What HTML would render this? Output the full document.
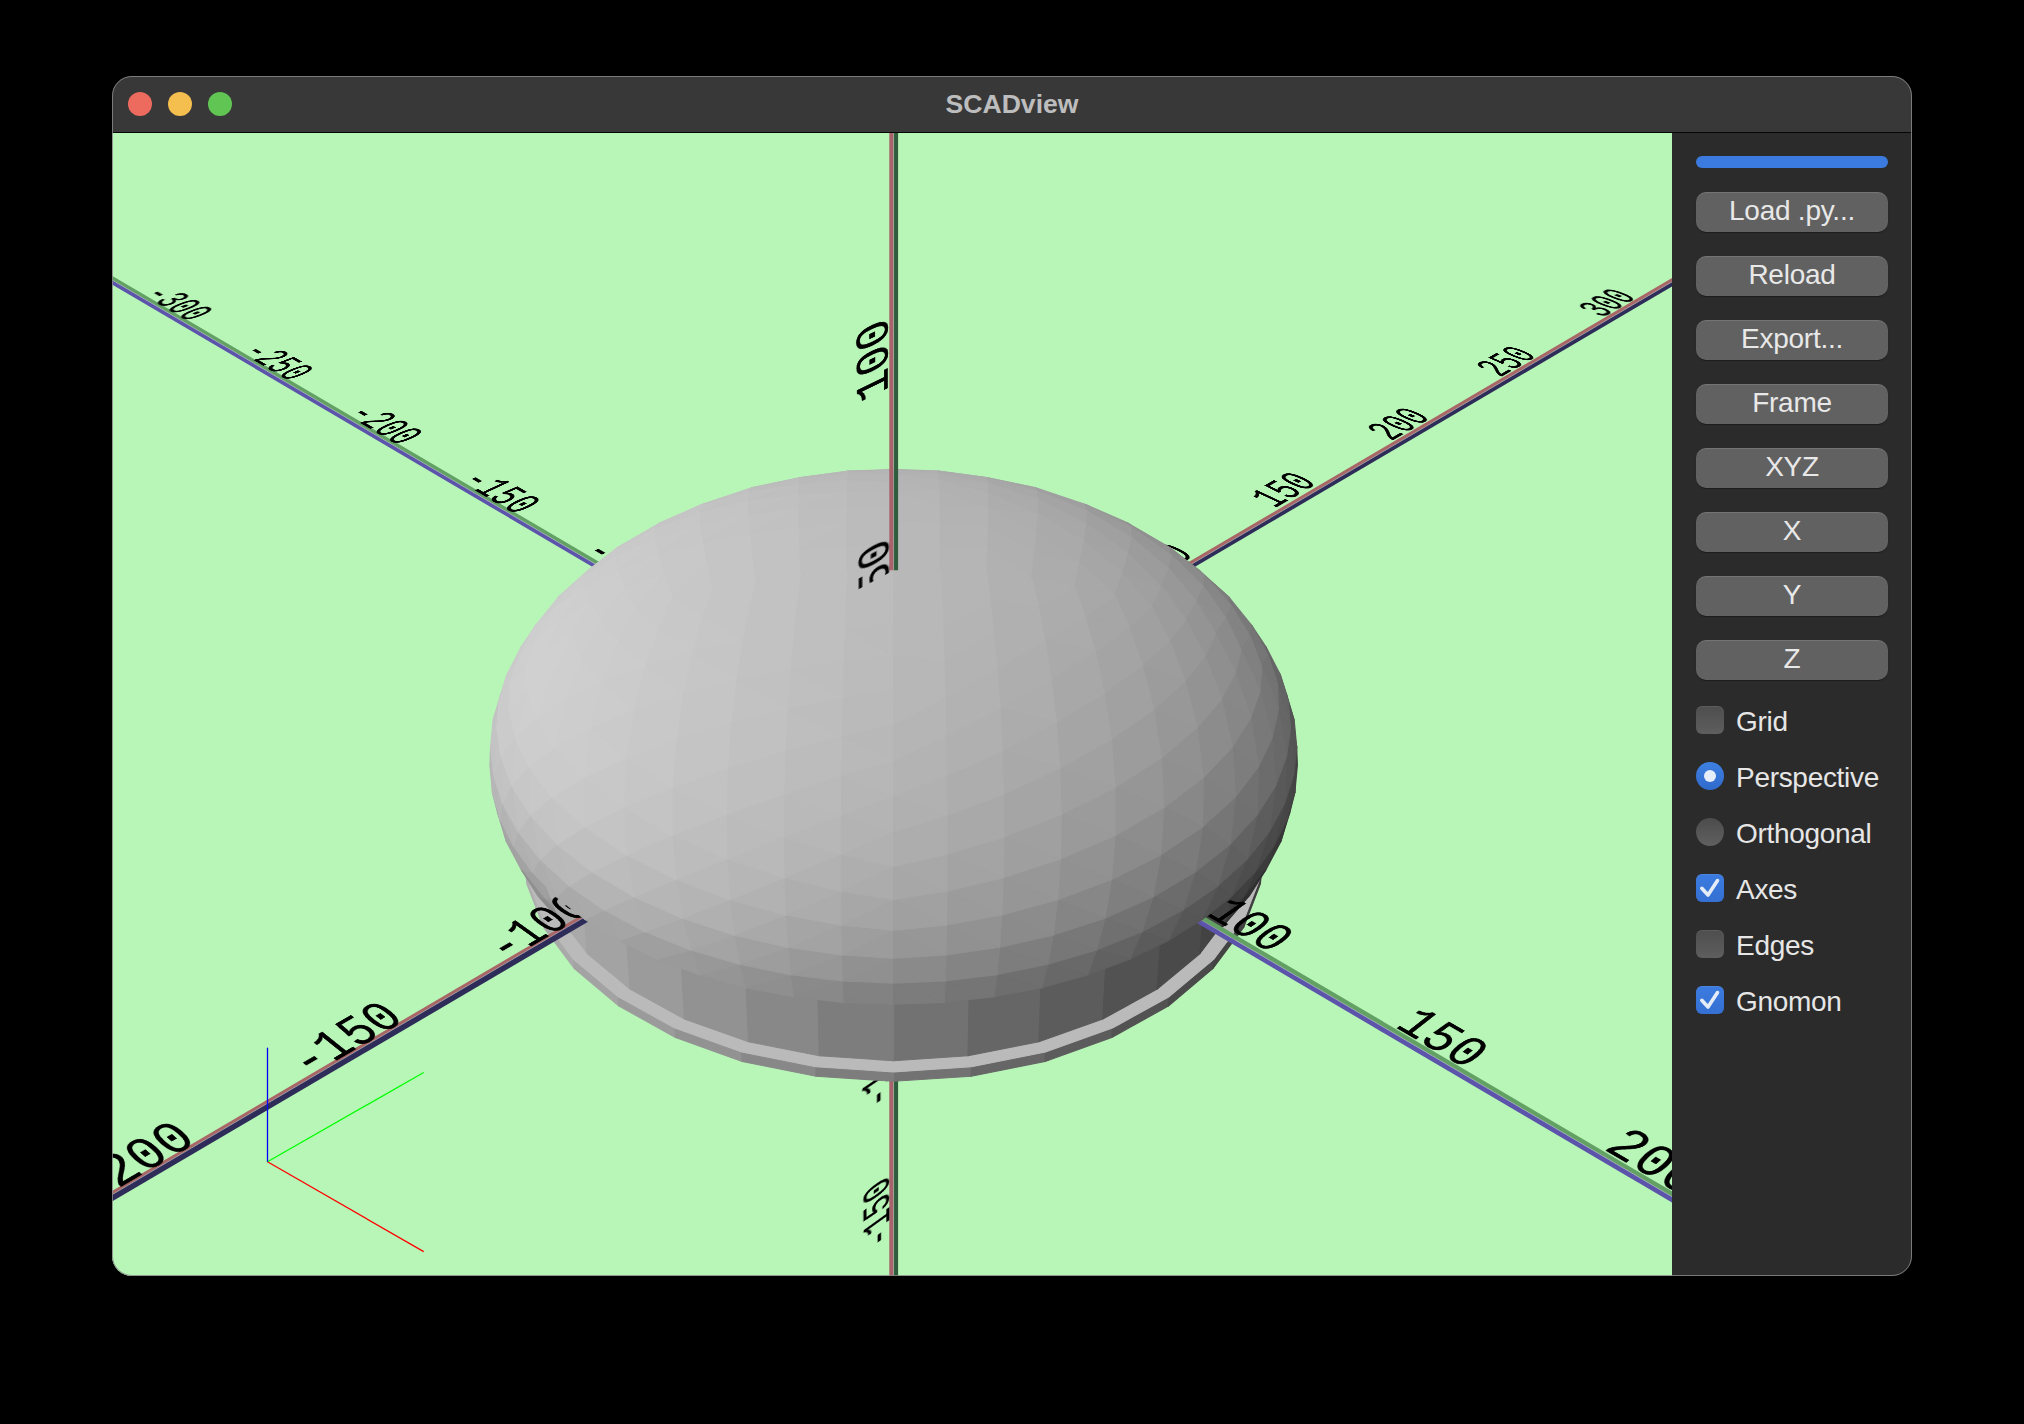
<!DOCTYPE html>
<html><head><meta charset="utf-8">
<style>
html,body{margin:0;padding:0;background:#000;width:2024px;height:1424px;overflow:hidden;font-family:"Liberation Sans",sans-serif;}
#win{position:absolute;left:112px;top:76px;width:1800px;height:1200px;border-radius:20px;overflow:hidden;background:#2b2b2b;}
#title{position:absolute;left:0;top:0;width:1800px;height:56px;background:#383838;}
#title .t{position:absolute;left:0;width:1800px;top:12.5px;text-align:center;color:#bdbdbd;font-weight:bold;font-size:26.6px;line-height:30px;}
.dot{position:absolute;top:16px;width:24px;height:24px;border-radius:50%;}
#sep{position:absolute;left:0;top:56px;width:1800px;height:1px;background:#050505;}
#view{position:absolute;left:0;top:57px;width:1560px;height:1143px;background:#b8f6b7;overflow:hidden;}
#panel{position:absolute;left:1560px;top:57px;width:240px;height:1143px;background:#2b2b2b;}
#frame{position:absolute;left:112px;top:76px;width:1800px;height:1200px;border-radius:20px;box-sizing:border-box;border:1px solid rgba(135,135,135,0.85);pointer-events:none;}
.btn{position:absolute;left:24px;width:192px;height:40px;border-radius:10px;background:#616161;color:#e8e8e8;font-size:28px;text-align:center;line-height:37px;letter-spacing:-0.25px;box-shadow:0 1px 1px rgba(0,0,0,0.35), inset 0 1px 0 rgba(255,255,255,0.12);}
.prog{position:absolute;left:24px;top:23px;width:192px;height:12px;border-radius:6px;background:#3b7ade;}
.cb{position:absolute;left:24px;width:28px;height:28px;border-radius:6px;background:linear-gradient(#4e4e4e,#5e5e5e);box-shadow:inset 0 1px 0 rgba(255,255,255,0.08);}
.cb.on{background:linear-gradient(#3b7be0,#3570d2);}
.rd{position:absolute;left:24px;width:28px;height:28px;border-radius:50%;background:linear-gradient(#4c4c4c,#606060);}
.rd.on{background:linear-gradient(#3e80e2,#2f6acb);}
.rd.on::after{content:"";position:absolute;left:8px;top:8px;width:12px;height:12px;border-radius:50%;background:#e6eefc;}
.lbl{position:absolute;left:64px;color:#e6e6e6;font-size:28px;line-height:30px;letter-spacing:-0.3px;}
.sv{position:absolute;left:0;top:0;}
.lb{position:absolute;left:0;top:0;font-family:"Liberation Mono",monospace;font-size:40px;line-height:40px;white-space:nowrap;transform-origin:0 0;color:#000;-webkit-text-stroke:0.3px #000;}
</style></head><body>
<div id="win">
  <div id="title">
    <div class="dot" style="left:16px;background:#ec6a5e;"></div>
    <div class="dot" style="left:56px;background:#f4bf4f;"></div>
    <div class="dot" style="left:96px;background:#61c554;"></div>
    <div class="t">SCADview</div>
  </div>
  <div id="sep"></div>
  <div id="view">
<svg class="sv" width="1560" height="1143"><polygon points="-161.4,52.1 781.6,606.3 783.5,603.1 -159.5,48.9" fill="#62a064"/><polygon points="-161.4,52.1 781.6,606.3 779.7,609.7 -163.4,55.4" fill="#5c54aa"/><line x1="-161.4" y1="52.1" x2="781.6" y2="606.3" stroke="#e8e0e8" stroke-opacity="0.4" stroke-width="0.9"/><polygon points="781.6,606.3 1724.7,52.1 1723.0,49.2 780.0,603.4" fill="#a86666"/><polygon points="781.6,606.3 1724.7,52.1 1726.7,55.5 783.7,609.7" fill="#2e2d5a"/><line x1="781.6" y1="606.3" x2="1724.7" y2="52.1" stroke="#e8e0e8" stroke-opacity="0.4" stroke-width="0.9"/><polygon points="781.6,1638.5 781.6,671.8 777.3,671.8 777.3,1638.5" fill="#a8626c"/><polygon points="781.6,1638.5 781.6,671.8 786.1,671.8 786.1,1638.5" fill="#2f5c3c"/><line x1="781.6" y1="1638.5" x2="781.6" y2="671.8" stroke="#e8e0e8" stroke-opacity="0.4" stroke-width="0.9"/></svg>
<div class="lb" style="transform:matrix3d(0.466283,0.248882,0,-0.000169177,-1.00648,0.343458,0,-0.000233465,0,0,1,0,60.1097,150.162,0,1)">-300</div>
<div class="lb" style="transform:matrix3d(0.482665,0.257616,0,-0.000175102,-1.04165,0.35551,0,-0.000241641,0,0,1,0,158.437,206.841,0,1)">-250</div>
<div class="lb" style="transform:matrix3d(0.500199,0.266911,0,-0.000181457,-1.07943,0.368337,0,-0.00025041,0,0,1,0,264.123,268.04,0,1)">-200</div>
<div class="lb" style="transform:matrix3d(0.519036,0.276924,0,-0.00018829,-1.12008,0.382155,0,-0.00025984,0,0,1,0,377.877,333.727,0,1)">-150</div>
<div class="lb" style="transform:matrix3d(0.539346,0.287761,0,-0.000195658,-1.16391,0.39711,0,-0.000270008,0,0,1,0,500.533,404.338,0,1)">-100</div>
<div class="lb" style="transform:matrix3d(0.858682,-0.292987,0,0.000198927,0.755115,0.404322,0,-0.00027452,0,0,1,0,1005.02,433.57,0,1)">100</div>
<div class="lb" style="transform:matrix3d(0.825826,-0.281776,0,0.000191316,0.726222,0.388851,0,-0.000264016,0,0,1,0,1131.73,360.625,0,1)">150</div>
<div class="lb" style="transform:matrix3d(0.795318,-0.271134,0,0.000184265,0.699561,0.374165,0,-0.000254286,0,0,1,0,1248.7,294.457,0,1)">200</div>
<div class="lb" style="transform:matrix3d(0.767085,-0.261497,0,0.000177716,0.674647,0.360866,0,-0.000245248,0,0,1,0,1357.93,231.691,0,1)">250</div>
<div class="lb" style="transform:matrix3d(0.74098,-0.252539,0,0.000171616,0.651183,0.348504,0,-0.00023683,0,0,1,0,1460.77,173.135,0,1)">300</div>
<div class="lb" style="transform:matrix3d(-0.160489,-0.92841,0,-0.000205323,1.18403,-0.403435,0,0.000274383,0,0,1,0,747.871,986.296,0,1)">-100</div>
<div class="lb" style="transform:matrix3d(-0.154159,-0.891789,0,-0.000197224,1.13733,-0.387521,0,0.00026356,0,0,1,0,749.203,1125.75,0,1)">-150</div>
<div class="lb" style="transform:matrix3d(-0.148309,-0.857947,0,-0.00018974,1.09417,-0.372815,0,0.000253558,0,0,1,0,750.434,1254.62,0,1)">-200</div>
<svg class="sv" width="1560" height="1143"><polygon points="781.6,948.3 859.3,943.3 859.5,933.8 781.6,938.9" fill="#727272" stroke="#727272" stroke-width="1.1" stroke-linejoin="round"/><polygon points="859.3,943.3 933.1,928.4 933.5,918.9 859.5,933.8" fill="#666666" stroke="#666666" stroke-width="1.1" stroke-linejoin="round"/><polygon points="933.1,928.4 999.8,904.5 1000.4,895.1 933.5,918.9" fill="#5c5c5c" stroke="#5c5c5c" stroke-width="1.1" stroke-linejoin="round"/><polygon points="999.8,904.5 1056.4,873.0 1057.1,863.7 1000.4,895.1" fill="#525252" stroke="#525252" stroke-width="1.1" stroke-linejoin="round"/><polygon points="1056.4,873.0 1100.8,835.7 1101.6,826.4 1057.1,863.7" fill="#4a4a4a" stroke="#4a4a4a" stroke-width="1.1" stroke-linejoin="round"/><polygon points="1100.8,835.7 1131.7,794.4 1132.6,785.1 1101.6,826.4" fill="#434343" stroke="#434343" stroke-width="1.1" stroke-linejoin="round"/><polygon points="1131.7,794.4 1148.4,750.9 1149.3,741.8 1132.6,785.1" fill="#3e3e3e" stroke="#3e3e3e" stroke-width="1.1" stroke-linejoin="round"/><polygon points="414.8,750.9 431.6,794.4 430.7,785.1 413.9,741.8" fill="#aeaeae" stroke="#aeaeae" stroke-width="1.1" stroke-linejoin="round"/><polygon points="431.6,794.4 462.4,835.7 461.6,826.4 430.7,785.1" fill="#a9a9a9" stroke="#a9a9a9" stroke-width="1.1" stroke-linejoin="round"/><polygon points="462.4,835.7 506.9,873.0 506.2,863.7 461.6,826.4" fill="#a3a3a3" stroke="#a3a3a3" stroke-width="1.1" stroke-linejoin="round"/><polygon points="506.9,873.0 563.5,904.5 562.9,895.1 506.2,863.7" fill="#9b9b9b" stroke="#9b9b9b" stroke-width="1.1" stroke-linejoin="round"/><polygon points="563.5,904.5 630.2,928.4 629.8,918.9 562.9,895.1" fill="#929292" stroke="#929292" stroke-width="1.1" stroke-linejoin="round"/><polygon points="630.2,928.4 704.0,943.3 703.8,933.8 629.8,918.9" fill="#888888" stroke="#888888" stroke-width="1.1" stroke-linejoin="round"/><polygon points="704.0,943.3 781.6,948.3 781.6,938.9 703.8,933.8" fill="#7d7d7d" stroke="#7d7d7d" stroke-width="1.1" stroke-linejoin="round"/><polygon points="781.6,938.9 859.5,933.8 933.5,918.9 1000.4,895.1 1057.1,863.7 1101.6,826.4 1132.6,785.1 1149.3,741.8 1152.1,698.1 1141.6,655.7 1118.9,616.0 1085.4,580.2 1042.7,549.2 992.5,523.6 936.4,504.0 876.1,490.8 813.4,484.1 749.9,484.1 687.1,490.8 626.9,504.0 570.8,523.6 520.6,549.2 477.9,580.2 444.4,616.0 421.7,655.7 411.2,698.1 413.9,741.8 430.7,785.1 461.6,826.4 506.2,863.7 562.9,895.1 629.8,918.9 703.8,933.8" fill="#bababa" stroke="#bababa" stroke-width="1.1" stroke-linejoin="round"/><polygon points="781.6,871.3 731.0,869.4 781.6,888.5" fill="#737373" stroke="#737373" stroke-width="1.1" stroke-linejoin="round"/><polygon points="731.0,869.4 730.7,886.7 781.6,888.5" fill="#737373" stroke="#737373" stroke-width="1.1" stroke-linejoin="round"/><polygon points="731.0,869.4 681.3,863.8 730.7,886.7" fill="#797979" stroke="#797979" stroke-width="1.1" stroke-linejoin="round"/><polygon points="681.3,863.8 679.5,880.9 730.7,886.7" fill="#797979" stroke="#797979" stroke-width="1.1" stroke-linejoin="round"/><polygon points="681.3,863.8 633.2,854.6 679.5,880.9" fill="#808080" stroke="#808080" stroke-width="1.1" stroke-linejoin="round"/><polygon points="633.2,854.6 629.1,871.0 679.5,880.9" fill="#7f7f7f" stroke="#7f7f7f" stroke-width="1.1" stroke-linejoin="round"/><polygon points="633.2,854.6 587.7,842.0 629.1,871.0" fill="#868686" stroke="#868686" stroke-width="1.1" stroke-linejoin="round"/><polygon points="587.7,842.0 580.8,856.8 629.1,871.0" fill="#858585" stroke="#858585" stroke-width="1.1" stroke-linejoin="round"/><polygon points="587.7,842.0 545.5,826.2 580.8,856.8" fill="#8d8d8d" stroke="#8d8d8d" stroke-width="1.1" stroke-linejoin="round"/><polygon points="545.5,826.2 535.8,838.7 580.8,856.8" fill="#8b8b8b" stroke="#8b8b8b" stroke-width="1.1" stroke-linejoin="round"/><polygon points="545.5,826.2 507.1,807.7 535.8,838.7" fill="#929292" stroke="#929292" stroke-width="1.1" stroke-linejoin="round"/><polygon points="507.1,807.7 495.4,817.1 535.8,838.7" fill="#909090" stroke="#909090" stroke-width="1.1" stroke-linejoin="round"/><polygon points="507.1,807.7 473.2,786.6 495.4,817.1" fill="#989898" stroke="#989898" stroke-width="1.1" stroke-linejoin="round"/><polygon points="473.2,786.6 460.5,792.5 495.4,817.1" fill="#969696" stroke="#969696" stroke-width="1.1" stroke-linejoin="round"/><polygon points="473.2,786.6 444.1,763.6 460.5,792.5" fill="#9c9c9c" stroke="#9c9c9c" stroke-width="1.1" stroke-linejoin="round"/><polygon points="444.1,763.6 431.8,765.7 460.5,792.5" fill="#9a9a9a" stroke="#9a9a9a" stroke-width="1.1" stroke-linejoin="round"/><polygon points="444.1,763.6 420.1,738.9 431.8,765.7" fill="#a0a0a0" stroke="#a0a0a0" stroke-width="1.1" stroke-linejoin="round"/><polygon points="420.1,738.9 409.7,737.4 431.8,765.7" fill="#9f9f9f" stroke="#9f9f9f" stroke-width="1.1" stroke-linejoin="round"/><polygon points="420.1,738.9 401.5,713.0 409.7,737.4" fill="#a3a3a3" stroke="#a3a3a3" stroke-width="1.1" stroke-linejoin="round"/><polygon points="401.5,713.0 394.3,708.4 409.7,737.4" fill="#a2a2a2" stroke="#a2a2a2" stroke-width="1.1" stroke-linejoin="round"/><polygon points="401.5,713.0 388.2,686.3 394.3,708.4" fill="#a5a5a5" stroke="#a5a5a5" stroke-width="1.1" stroke-linejoin="round"/><polygon points="388.2,686.3 385.4,679.4 394.3,708.4" fill="#a5a5a5" stroke="#a5a5a5" stroke-width="1.1" stroke-linejoin="round"/><polygon points="388.2,686.3 380.4,659.3 385.4,679.4" fill="#a7a7a7" stroke="#a7a7a7" stroke-width="1.1" stroke-linejoin="round"/><polygon points="781.6,888.5 730.7,886.7 781.6,901.5" fill="#646464" stroke="#646464" stroke-width="1.1" stroke-linejoin="round"/><polygon points="730.7,886.7 730.5,900.0 781.6,901.5" fill="#646464" stroke="#646464" stroke-width="1.1" stroke-linejoin="round"/><polygon points="730.7,886.7 679.5,880.9 730.5,900.0" fill="#6a6a6a" stroke="#6a6a6a" stroke-width="1.1" stroke-linejoin="round"/><polygon points="679.5,880.9 678.0,894.1 730.5,900.0" fill="#6a6a6a" stroke="#6a6a6a" stroke-width="1.1" stroke-linejoin="round"/><polygon points="679.5,880.9 629.1,871.0 678.0,894.1" fill="#717171" stroke="#717171" stroke-width="1.1" stroke-linejoin="round"/><polygon points="629.1,871.0 625.5,883.3 678.0,894.1" fill="#707070" stroke="#707070" stroke-width="1.1" stroke-linejoin="round"/><polygon points="629.1,871.0 580.8,856.8 625.5,883.3" fill="#777777" stroke="#777777" stroke-width="1.1" stroke-linejoin="round"/><polygon points="580.8,856.8 574.9,867.4 625.5,883.3" fill="#757575" stroke="#757575" stroke-width="1.1" stroke-linejoin="round"/><polygon points="580.8,856.8 535.8,838.7 574.9,867.4" fill="#7d7d7d" stroke="#7d7d7d" stroke-width="1.1" stroke-linejoin="round"/><polygon points="535.8,838.7 528.0,846.6 574.9,867.4" fill="#7b7b7b" stroke="#7b7b7b" stroke-width="1.1" stroke-linejoin="round"/><polygon points="535.8,838.7 495.4,817.1 528.0,846.6" fill="#838383" stroke="#838383" stroke-width="1.1" stroke-linejoin="round"/><polygon points="495.4,817.1 486.6,821.5 528.0,846.6" fill="#818181" stroke="#818181" stroke-width="1.1" stroke-linejoin="round"/><polygon points="495.4,817.1 460.5,792.5 486.6,821.5" fill="#888888" stroke="#888888" stroke-width="1.1" stroke-linejoin="round"/><polygon points="460.5,792.5 452.3,793.1 486.6,821.5" fill="#868686" stroke="#868686" stroke-width="1.1" stroke-linejoin="round"/><polygon points="460.5,792.5 431.8,765.7 452.3,793.1" fill="#8c8c8c" stroke="#8c8c8c" stroke-width="1.1" stroke-linejoin="round"/><polygon points="431.8,765.7 425.8,762.6 452.3,793.1" fill="#8b8b8b" stroke="#8b8b8b" stroke-width="1.1" stroke-linejoin="round"/><polygon points="431.8,765.7 409.7,737.4 425.8,762.6" fill="#909090" stroke="#909090" stroke-width="1.1" stroke-linejoin="round"/><polygon points="781.6,901.5 730.5,900.0 781.6,910.2" fill="#575757" stroke="#575757" stroke-width="1.1" stroke-linejoin="round"/><polygon points="730.5,900.0 730.5,908.8 781.6,910.2" fill="#575757" stroke="#575757" stroke-width="1.1" stroke-linejoin="round"/><polygon points="730.5,900.0 678.0,894.1 730.5,908.8" fill="#5d5d5d" stroke="#5d5d5d" stroke-width="1.1" stroke-linejoin="round"/><polygon points="678.0,894.1 677.0,902.4 730.5,908.8" fill="#5c5c5c" stroke="#5c5c5c" stroke-width="1.1" stroke-linejoin="round"/><polygon points="678.0,894.1 625.5,883.3 677.0,902.4" fill="#636363" stroke="#636363" stroke-width="1.1" stroke-linejoin="round"/><polygon points="625.5,883.3 623.1,890.4 677.0,902.4" fill="#616161" stroke="#616161" stroke-width="1.1" stroke-linejoin="round"/><polygon points="625.5,883.3 574.9,867.4 623.1,890.4" fill="#686868" stroke="#686868" stroke-width="1.1" stroke-linejoin="round"/><polygon points="574.9,867.4 571.0,872.3 623.1,890.4" fill="#676767" stroke="#676767" stroke-width="1.1" stroke-linejoin="round"/><polygon points="574.9,867.4 528.0,846.6 571.0,872.3" fill="#6e6e6e" stroke="#6e6e6e" stroke-width="1.1" stroke-linejoin="round"/><polygon points="528.0,846.6 523.4,848.3 571.0,872.3" fill="#6c6c6c" stroke="#6c6c6c" stroke-width="1.1" stroke-linejoin="round"/><polygon points="528.0,846.6 486.6,821.5 523.4,848.3" fill="#737373" stroke="#737373" stroke-width="1.1" stroke-linejoin="round"/><polygon points="486.6,821.5 482.8,819.6 523.4,848.3" fill="#717171" stroke="#717171" stroke-width="1.1" stroke-linejoin="round"/><polygon points="486.6,821.5 452.3,793.1 482.8,819.6" fill="#787878" stroke="#787878" stroke-width="1.1" stroke-linejoin="round"/><polygon points="781.6,910.2 730.5,908.8 781.6,914.6" fill="#4d4d4d" stroke="#4d4d4d" stroke-width="1.1" stroke-linejoin="round"/><polygon points="730.5,908.8 730.6,912.6 781.6,914.6" fill="#4d4d4d" stroke="#4d4d4d" stroke-width="1.1" stroke-linejoin="round"/><polygon points="730.5,908.8 677.0,902.4 730.6,912.6" fill="#525252" stroke="#525252" stroke-width="1.1" stroke-linejoin="round"/><polygon points="677.0,902.4 676.7,905.2 730.6,912.6" fill="#515151" stroke="#515151" stroke-width="1.1" stroke-linejoin="round"/><polygon points="677.0,902.4 623.1,890.4 676.7,905.2" fill="#575757" stroke="#575757" stroke-width="1.1" stroke-linejoin="round"/><polygon points="623.1,890.4 622.1,891.2 676.7,905.2" fill="#565656" stroke="#565656" stroke-width="1.1" stroke-linejoin="round"/><polygon points="623.1,890.4 571.0,872.3 622.1,891.2" fill="#5c5c5c" stroke="#5c5c5c" stroke-width="1.1" stroke-linejoin="round"/><polygon points="781.6,914.6 730.6,912.6 781.6,914.6" fill="#464646" stroke="#464646" stroke-width="1.1" stroke-linejoin="round"/><polygon points="1182.9,659.3 1175.1,686.3 1177.9,679.4" fill="#363636" stroke="#363636" stroke-width="1.1" stroke-linejoin="round"/><polygon points="1175.1,686.3 1168.9,708.4 1177.9,679.4" fill="#353535" stroke="#353535" stroke-width="1.1" stroke-linejoin="round"/><polygon points="1175.1,686.3 1161.8,713.0 1168.9,708.4" fill="#383838" stroke="#383838" stroke-width="1.1" stroke-linejoin="round"/><polygon points="1161.8,713.0 1153.5,737.4 1168.9,708.4" fill="#373737" stroke="#373737" stroke-width="1.1" stroke-linejoin="round"/><polygon points="1161.8,713.0 1143.2,738.9 1153.5,737.4" fill="#3c3c3c" stroke="#3c3c3c" stroke-width="1.1" stroke-linejoin="round"/><polygon points="1143.2,738.9 1131.5,765.7 1153.5,737.4" fill="#3a3a3a" stroke="#3a3a3a" stroke-width="1.1" stroke-linejoin="round"/><polygon points="1143.2,738.9 1119.2,763.6 1131.5,765.7" fill="#404040" stroke="#404040" stroke-width="1.1" stroke-linejoin="round"/><polygon points="1119.2,763.6 1102.8,792.5 1131.5,765.7" fill="#3e3e3e" stroke="#3e3e3e" stroke-width="1.1" stroke-linejoin="round"/><polygon points="1119.2,763.6 1090.1,786.6 1102.8,792.5" fill="#444444" stroke="#444444" stroke-width="1.1" stroke-linejoin="round"/><polygon points="1090.1,786.6 1067.9,817.1 1102.8,792.5" fill="#434343" stroke="#434343" stroke-width="1.1" stroke-linejoin="round"/><polygon points="1090.1,786.6 1056.1,807.7 1067.9,817.1" fill="#494949" stroke="#494949" stroke-width="1.1" stroke-linejoin="round"/><polygon points="1056.1,807.7 1027.5,838.7 1067.9,817.1" fill="#494949" stroke="#494949" stroke-width="1.1" stroke-linejoin="round"/><polygon points="1056.1,807.7 1017.8,826.2 1027.5,838.7" fill="#4e4e4e" stroke="#4e4e4e" stroke-width="1.1" stroke-linejoin="round"/><polygon points="1017.8,826.2 982.5,856.8 1027.5,838.7" fill="#4f4f4f" stroke="#4f4f4f" stroke-width="1.1" stroke-linejoin="round"/><polygon points="1017.8,826.2 975.5,842.0 982.5,856.8" fill="#545454" stroke="#545454" stroke-width="1.1" stroke-linejoin="round"/><polygon points="975.5,842.0 934.2,871.0 982.5,856.8" fill="#565656" stroke="#565656" stroke-width="1.1" stroke-linejoin="round"/><polygon points="975.5,842.0 930.0,854.6 934.2,871.0" fill="#595959" stroke="#595959" stroke-width="1.1" stroke-linejoin="round"/><polygon points="930.0,854.6 883.8,880.9 934.2,871.0" fill="#5d5d5d" stroke="#5d5d5d" stroke-width="1.1" stroke-linejoin="round"/><polygon points="930.0,854.6 882.0,863.8 883.8,880.9" fill="#5f5f5f" stroke="#5f5f5f" stroke-width="1.1" stroke-linejoin="round"/><polygon points="882.0,863.8 832.6,886.7 883.8,880.9" fill="#656565" stroke="#656565" stroke-width="1.1" stroke-linejoin="round"/><polygon points="882.0,863.8 832.3,869.4 832.6,886.7" fill="#666666" stroke="#666666" stroke-width="1.1" stroke-linejoin="round"/><polygon points="832.3,869.4 781.6,888.5 832.6,886.7" fill="#6c6c6c" stroke="#6c6c6c" stroke-width="1.1" stroke-linejoin="round"/><polygon points="832.3,869.4 781.6,871.3 781.6,888.5" fill="#6c6c6c" stroke="#6c6c6c" stroke-width="1.1" stroke-linejoin="round"/><polygon points="1153.5,737.4 1131.5,765.7 1137.5,762.6" fill="#303030" stroke="#303030" stroke-width="1.1" stroke-linejoin="round"/><polygon points="1131.5,765.7 1111.0,793.1 1137.5,762.6" fill="#2e2e2e" stroke="#2e2e2e" stroke-width="1.1" stroke-linejoin="round"/><polygon points="1131.5,765.7 1102.8,792.5 1111.0,793.1" fill="#343434" stroke="#343434" stroke-width="1.1" stroke-linejoin="round"/><polygon points="1102.8,792.5 1076.7,821.5 1111.0,793.1" fill="#333333" stroke="#333333" stroke-width="1.1" stroke-linejoin="round"/><polygon points="1102.8,792.5 1067.9,817.1 1076.7,821.5" fill="#393939" stroke="#393939" stroke-width="1.1" stroke-linejoin="round"/><polygon points="1067.9,817.1 1035.3,846.6 1076.7,821.5" fill="#393939" stroke="#393939" stroke-width="1.1" stroke-linejoin="round"/><polygon points="1067.9,817.1 1027.5,838.7 1035.3,846.6" fill="#3e3e3e" stroke="#3e3e3e" stroke-width="1.1" stroke-linejoin="round"/><polygon points="1027.5,838.7 988.4,867.4 1035.3,846.6" fill="#3f3f3f" stroke="#3f3f3f" stroke-width="1.1" stroke-linejoin="round"/><polygon points="1027.5,838.7 982.5,856.8 988.4,867.4" fill="#444444" stroke="#444444" stroke-width="1.1" stroke-linejoin="round"/><polygon points="982.5,856.8 937.7,883.3 988.4,867.4" fill="#464646" stroke="#464646" stroke-width="1.1" stroke-linejoin="round"/><polygon points="982.5,856.8 934.2,871.0 937.7,883.3" fill="#4a4a4a" stroke="#4a4a4a" stroke-width="1.1" stroke-linejoin="round"/><polygon points="934.2,871.0 885.3,894.1 937.7,883.3" fill="#4e4e4e" stroke="#4e4e4e" stroke-width="1.1" stroke-linejoin="round"/><polygon points="934.2,871.0 883.8,880.9 885.3,894.1" fill="#515151" stroke="#515151" stroke-width="1.1" stroke-linejoin="round"/><polygon points="883.8,880.9 832.8,900.0 885.3,894.1" fill="#555555" stroke="#555555" stroke-width="1.1" stroke-linejoin="round"/><polygon points="883.8,880.9 832.6,886.7 832.8,900.0" fill="#575757" stroke="#575757" stroke-width="1.1" stroke-linejoin="round"/><polygon points="832.6,886.7 781.6,901.5 832.8,900.0" fill="#5d5d5d" stroke="#5d5d5d" stroke-width="1.1" stroke-linejoin="round"/><polygon points="832.6,886.7 781.6,888.5 781.6,901.5" fill="#5e5e5e" stroke="#5e5e5e" stroke-width="1.1" stroke-linejoin="round"/><polygon points="1111.0,793.1 1076.7,821.5 1080.5,819.6" fill="#2c2c2c" stroke="#2c2c2c" stroke-width="1.1" stroke-linejoin="round"/><polygon points="1076.7,821.5 1039.8,848.3 1080.5,819.6" fill="#2d2d2d" stroke="#2d2d2d" stroke-width="1.1" stroke-linejoin="round"/><polygon points="1076.7,821.5 1035.3,846.6 1039.8,848.3" fill="#313131" stroke="#313131" stroke-width="1.1" stroke-linejoin="round"/><polygon points="1035.3,846.6 992.3,872.3 1039.8,848.3" fill="#333333" stroke="#333333" stroke-width="1.1" stroke-linejoin="round"/><polygon points="1035.3,846.6 988.4,867.4 992.3,872.3" fill="#373737" stroke="#373737" stroke-width="1.1" stroke-linejoin="round"/><polygon points="988.4,867.4 940.2,890.4 992.3,872.3" fill="#393939" stroke="#393939" stroke-width="1.1" stroke-linejoin="round"/><polygon points="988.4,867.4 937.7,883.3 940.2,890.4" fill="#3d3d3d" stroke="#3d3d3d" stroke-width="1.1" stroke-linejoin="round"/><polygon points="937.7,883.3 886.3,902.4 940.2,890.4" fill="#414141" stroke="#414141" stroke-width="1.1" stroke-linejoin="round"/><polygon points="937.7,883.3 885.3,894.1 886.3,902.4" fill="#444444" stroke="#444444" stroke-width="1.1" stroke-linejoin="round"/><polygon points="885.3,894.1 832.8,908.8 886.3,902.4" fill="#494949" stroke="#494949" stroke-width="1.1" stroke-linejoin="round"/><polygon points="885.3,894.1 832.8,900.0 832.8,908.8" fill="#4b4b4b" stroke="#4b4b4b" stroke-width="1.1" stroke-linejoin="round"/><polygon points="832.8,900.0 781.6,910.2 832.8,908.8" fill="#505050" stroke="#505050" stroke-width="1.1" stroke-linejoin="round"/><polygon points="832.8,900.0 781.6,901.5 781.6,910.2" fill="#525252" stroke="#525252" stroke-width="1.1" stroke-linejoin="round"/><polygon points="992.3,872.3 940.2,890.4 941.1,891.2" fill="#343434" stroke="#343434" stroke-width="1.1" stroke-linejoin="round"/><polygon points="940.2,890.4 886.6,905.2 941.1,891.2" fill="#373737" stroke="#373737" stroke-width="1.1" stroke-linejoin="round"/><polygon points="940.2,890.4 886.3,902.4 886.6,905.2" fill="#3b3b3b" stroke="#3b3b3b" stroke-width="1.1" stroke-linejoin="round"/><polygon points="886.3,902.4 832.7,912.6 886.6,905.2" fill="#3f3f3f" stroke="#3f3f3f" stroke-width="1.1" stroke-linejoin="round"/><polygon points="886.3,902.4 832.8,908.8 832.7,912.6" fill="#414141" stroke="#414141" stroke-width="1.1" stroke-linejoin="round"/><polygon points="832.8,908.8 781.6,914.6 832.7,912.6" fill="#464646" stroke="#464646" stroke-width="1.1" stroke-linejoin="round"/><polygon points="832.8,908.8 781.6,910.2 781.6,914.6" fill="#484848" stroke="#484848" stroke-width="1.1" stroke-linejoin="round"/><polygon points="832.7,912.6 781.6,914.6 781.6,914.6" fill="#414141" stroke="#414141" stroke-width="1.1" stroke-linejoin="round"/><polygon points="781.6,927.7 856.0,922.8 857.7,838.3 781.6,843.1" fill="#727272" stroke="#727272" stroke-width="1.1" stroke-linejoin="round"/><polygon points="856.0,922.8 926.8,908.7 930.2,824.3 857.7,838.3" fill="#666666" stroke="#666666" stroke-width="1.1" stroke-linejoin="round"/><polygon points="926.8,908.7 990.8,886.0 995.6,801.9 930.2,824.3" fill="#5c5c5c" stroke="#5c5c5c" stroke-width="1.1" stroke-linejoin="round"/><polygon points="990.8,886.0 1045.2,856.1 1051.2,772.4 995.6,801.9" fill="#525252" stroke="#525252" stroke-width="1.1" stroke-linejoin="round"/><polygon points="1045.2,856.1 1088.0,820.5 1094.8,737.4 1051.2,772.4" fill="#4a4a4a" stroke="#4a4a4a" stroke-width="1.1" stroke-linejoin="round"/><polygon points="1088.0,820.5 1117.8,781.0 1125.2,698.5 1094.8,737.4" fill="#434343" stroke="#434343" stroke-width="1.1" stroke-linejoin="round"/><polygon points="1117.8,781.0 1134.2,739.5 1141.8,657.6 1125.2,698.5" fill="#3e3e3e" stroke="#3e3e3e" stroke-width="1.1" stroke-linejoin="round"/><polygon points="429.1,739.5 445.5,781.0 438.0,698.5 421.5,657.6" fill="#aeaeae" stroke="#aeaeae" stroke-width="1.1" stroke-linejoin="round"/><polygon points="445.5,781.0 475.3,820.5 468.4,737.4 438.0,698.5" fill="#a9a9a9" stroke="#a9a9a9" stroke-width="1.1" stroke-linejoin="round"/><polygon points="475.3,820.5 518.1,856.1 512.1,772.4 468.4,737.4" fill="#a3a3a3" stroke="#a3a3a3" stroke-width="1.1" stroke-linejoin="round"/><polygon points="518.1,856.1 572.5,886.0 567.7,801.9 512.1,772.4" fill="#9b9b9b" stroke="#9b9b9b" stroke-width="1.1" stroke-linejoin="round"/><polygon points="572.5,886.0 636.5,908.7 633.1,824.3 567.7,801.9" fill="#929292" stroke="#929292" stroke-width="1.1" stroke-linejoin="round"/><polygon points="636.5,908.7 707.3,922.8 705.5,838.3 633.1,824.3" fill="#888888" stroke="#888888" stroke-width="1.1" stroke-linejoin="round"/><polygon points="707.3,922.8 781.6,927.7 781.6,843.1 705.5,838.3" fill="#7d7d7d" stroke="#7d7d7d" stroke-width="1.1" stroke-linejoin="round"/><polygon points="1086.4,785.4 2804.4,1795.0 2806.7,1791.0 1088.7,781.4" fill="#62a064"/><polygon points="1086.4,785.4 2804.4,1795.0 2801.9,1799.2 1083.9,789.6" fill="#5c54aa"/><line x1="1086.4" y1="785.4" x2="2804.4" y2="1795.0" stroke="#e8e0e8" stroke-opacity="0.4" stroke-width="0.9"/><polygon points="-1242.8,1792.2 475.2,782.5 473.5,779.7 -1244.4,1789.3" fill="#a86666"/><polygon points="-1242.8,1792.2 475.2,782.5 478.2,787.5 -1239.8,1797.2" fill="#2e2d5a"/><line x1="-1242.8" y1="1792.2" x2="475.2" y2="782.5" stroke="#e8e0e8" stroke-opacity="0.4" stroke-width="0.9"/></svg>
<div class="lb" style="transform:matrix3d(0.639289,0.341811,0,-0.000232614,-1.38642,0.4717,0,-0.000321008,0,0,1,0,1124.05,759.807,0,1)">100</div>
<div class="lb" style="transform:matrix3d(0.670604,0.358245,0,-0.000243964,-1.4539,0.494379,0,-0.000336671,0,0,1,0,1312.49,869.578,0,1)">150</div>
<div class="lb" style="transform:matrix3d(0.705003,0.376622,0,-0.000256479,-1.52848,0.519738,0,-0.00035394,0,0,1,0,1520.81,989.508,0,1)">200</div>
<div class="lb" style="transform:matrix3d(0.743122,0.396985,0,-0.000270346,-1.61112,0.54784,0,-0.000373078,0,0,1,0,1751.67,1122.41,0,1)">250</div>
<div class="lb" style="transform:matrix3d(1.02316,-0.348291,0,0.00023725,0.901896,0.480642,0,-0.000327405,0,0,1,0,363.064,805.633,0,1)">-100</div>
<div class="lb" style="transform:matrix3d(1.07412,-0.365641,0,0.000249068,0.946823,0.504584,0,-0.000343714,0,0,1,0,166.325,918.893,0,1)">-150</div>
<div class="lb" style="transform:matrix3d(1.13043,-0.38481,0,0.000262126,0.99646,0.531037,0,-0.000361734,0,0,1,0,-51.0416,1044.03,0,1)">-200</div>
<div class="lb" style="transform:matrix3d(1.19298,-0.406099,0,0.000276628,1.05159,0.560417,0,-0.000381747,0,0,1,0,-292.461,1183.01,0,1)">-250</div>
<svg class="sv" width="1560" height="1143"><polygon points="1174.4,560.6 1176.4,568.8 1168.2,541.5" fill="#545454" stroke="#545454" stroke-width="1.1" stroke-linejoin="round"/><polygon points="1174.4,560.6 1182.2,587.1 1176.4,568.8" fill="#535353" stroke="#535353" stroke-width="1.1" stroke-linejoin="round"/><polygon points="1154.1,514.0 1156.2,522.3 1140.3,493.2" fill="#686868" stroke="#686868" stroke-width="1.1" stroke-linejoin="round"/><polygon points="1154.1,514.0 1168.2,541.5 1156.2,522.3" fill="#656565" stroke="#656565" stroke-width="1.1" stroke-linejoin="round"/><polygon points="1168.2,541.5 1165.6,550.9 1156.2,522.3" fill="#666666" stroke="#666666" stroke-width="1.1" stroke-linejoin="round"/><polygon points="1168.2,541.5 1176.4,568.8 1165.6,550.9" fill="#646464" stroke="#646464" stroke-width="1.1" stroke-linejoin="round"/><polygon points="1087.2,437.3 1092.6,442.6 1057.7,414.5" fill="#818181" stroke="#818181" stroke-width="1.1" stroke-linejoin="round"/><polygon points="1087.2,437.3 1117.3,464.5 1092.6,442.6" fill="#7c7c7c" stroke="#7c7c7c" stroke-width="1.1" stroke-linejoin="round"/><polygon points="1117.3,464.5 1119.4,472.8 1092.6,442.6" fill="#7d7d7d" stroke="#7d7d7d" stroke-width="1.1" stroke-linejoin="round"/><polygon points="1117.3,464.5 1140.3,493.2 1119.4,472.8" fill="#787878" stroke="#787878" stroke-width="1.1" stroke-linejoin="round"/><polygon points="1140.3,493.2 1138.2,503.5 1119.4,472.8" fill="#797979" stroke="#797979" stroke-width="1.1" stroke-linejoin="round"/><polygon points="1140.3,493.2 1156.2,522.3 1138.2,503.5" fill="#757575" stroke="#757575" stroke-width="1.1" stroke-linejoin="round"/><polygon points="1156.2,522.3 1149.7,533.4 1138.2,503.5" fill="#767676" stroke="#767676" stroke-width="1.1" stroke-linejoin="round"/><polygon points="1156.2,522.3 1165.6,550.9 1149.7,533.4" fill="#737373" stroke="#737373" stroke-width="1.1" stroke-linejoin="round"/><polygon points="1016.0,390.1 1019.9,394.4 973.6,371.5" fill="#949494" stroke="#949494" stroke-width="1.1" stroke-linejoin="round"/><polygon points="1016.0,390.1 1057.7,414.5 1019.9,394.4" fill="#8e8e8e" stroke="#8e8e8e" stroke-width="1.1" stroke-linejoin="round"/><polygon points="1057.7,414.5 1059.9,422.4 1019.9,394.4" fill="#909090" stroke="#909090" stroke-width="1.1" stroke-linejoin="round"/><polygon points="1057.7,414.5 1092.6,442.6 1059.9,422.4" fill="#8a8a8a" stroke="#8a8a8a" stroke-width="1.1" stroke-linejoin="round"/><polygon points="1092.6,442.6 1091.5,453.4 1059.9,422.4" fill="#8b8b8b" stroke="#8b8b8b" stroke-width="1.1" stroke-linejoin="round"/><polygon points="1092.6,442.6 1119.4,472.8 1091.5,453.4" fill="#868686" stroke="#868686" stroke-width="1.1" stroke-linejoin="round"/><polygon points="1119.4,472.8 1114.3,485.5 1091.5,453.4" fill="#878787" stroke="#878787" stroke-width="1.1" stroke-linejoin="round"/><polygon points="1119.4,472.8 1138.2,503.5 1114.3,485.5" fill="#838383" stroke="#838383" stroke-width="1.1" stroke-linejoin="round"/><polygon points="1138.2,503.5 1129.0,516.7 1114.3,485.5" fill="#838383" stroke="#838383" stroke-width="1.1" stroke-linejoin="round"/><polygon points="1138.2,503.5 1149.7,533.4 1129.0,516.7" fill="#808080" stroke="#808080" stroke-width="1.1" stroke-linejoin="round"/><polygon points="873.6,344.4 875.2,344.9 826.4,338.1" fill="#a7a7a7" stroke="#a7a7a7" stroke-width="1.1" stroke-linejoin="round"/><polygon points="873.6,344.4 923.8,354.8 875.2,344.9" fill="#a3a3a3" stroke="#a3a3a3" stroke-width="1.1" stroke-linejoin="round"/><polygon points="923.8,354.8 926.0,358.2 875.2,344.9" fill="#a4a4a4" stroke="#a4a4a4" stroke-width="1.1" stroke-linejoin="round"/><polygon points="923.8,354.8 973.6,371.5 926.0,358.2" fill="#9f9f9f" stroke="#9f9f9f" stroke-width="1.1" stroke-linejoin="round"/><polygon points="973.6,371.5 975.5,378.4 926.0,358.2" fill="#9f9f9f" stroke="#9f9f9f" stroke-width="1.1" stroke-linejoin="round"/><polygon points="973.6,371.5 1019.9,394.4 975.5,378.4" fill="#9a9a9a" stroke="#9a9a9a" stroke-width="1.1" stroke-linejoin="round"/><polygon points="1019.9,394.4 1020.1,405.0 975.5,378.4" fill="#9b9b9b" stroke="#9b9b9b" stroke-width="1.1" stroke-linejoin="round"/><polygon points="1019.9,394.4 1059.9,422.4 1020.1,405.0" fill="#969696" stroke="#969696" stroke-width="1.1" stroke-linejoin="round"/><polygon points="1059.9,422.4 1056.9,435.9 1020.1,405.0" fill="#979797" stroke="#979797" stroke-width="1.1" stroke-linejoin="round"/><polygon points="1059.9,422.4 1091.5,453.4 1056.9,435.9" fill="#929292" stroke="#929292" stroke-width="1.1" stroke-linejoin="round"/><polygon points="1091.5,453.4 1084.7,468.7 1056.9,435.9" fill="#939393" stroke="#939393" stroke-width="1.1" stroke-linejoin="round"/><polygon points="1091.5,453.4 1114.3,485.5 1084.7,468.7" fill="#8e8e8e" stroke="#8e8e8e" stroke-width="1.1" stroke-linejoin="round"/><polygon points="1114.3,485.5 1103.7,501.1 1084.7,468.7" fill="#8f8f8f" stroke="#8f8f8f" stroke-width="1.1" stroke-linejoin="round"/><polygon points="1114.3,485.5 1129.0,516.7 1103.7,501.1" fill="#8b8b8b" stroke="#8b8b8b" stroke-width="1.1" stroke-linejoin="round"/><polygon points="781.6,336.4 826.4,338.1 781.6,337.2" fill="#aeaeae" stroke="#aeaeae" stroke-width="1.1" stroke-linejoin="round"/><polygon points="826.4,338.1 827.0,340.8 781.6,337.2" fill="#afafaf" stroke="#afafaf" stroke-width="1.1" stroke-linejoin="round"/><polygon points="826.4,338.1 875.2,344.9 827.0,340.8" fill="#ababab" stroke="#ababab" stroke-width="1.1" stroke-linejoin="round"/><polygon points="875.2,344.9 876.3,350.4 827.0,340.8" fill="#acacac" stroke="#acacac" stroke-width="1.1" stroke-linejoin="round"/><polygon points="875.2,344.9 926.0,358.2 876.3,350.4" fill="#a7a7a7" stroke="#a7a7a7" stroke-width="1.1" stroke-linejoin="round"/><polygon points="926.0,358.2 926.8,367.1 876.3,350.4" fill="#a8a8a8" stroke="#a8a8a8" stroke-width="1.1" stroke-linejoin="round"/><polygon points="926.0,358.2 975.5,378.4 926.8,367.1" fill="#a4a4a4" stroke="#a4a4a4" stroke-width="1.1" stroke-linejoin="round"/><polygon points="975.5,378.4 974.8,391.1 926.8,367.1" fill="#a4a4a4" stroke="#a4a4a4" stroke-width="1.1" stroke-linejoin="round"/><polygon points="975.5,378.4 1020.1,405.0 974.8,391.1" fill="#a0a0a0" stroke="#a0a0a0" stroke-width="1.1" stroke-linejoin="round"/><polygon points="1020.1,405.0 1016.6,420.8 974.8,391.1" fill="#a0a0a0" stroke="#a0a0a0" stroke-width="1.1" stroke-linejoin="round"/><polygon points="1020.1,405.0 1056.9,435.9 1016.6,420.8" fill="#9c9c9c" stroke="#9c9c9c" stroke-width="1.1" stroke-linejoin="round"/><polygon points="1056.9,435.9 1049.8,453.6 1016.6,420.8" fill="#9c9c9c" stroke="#9c9c9c" stroke-width="1.1" stroke-linejoin="round"/><polygon points="1056.9,435.9 1084.7,468.7 1049.8,453.6" fill="#989898" stroke="#989898" stroke-width="1.1" stroke-linejoin="round"/><polygon points="1084.7,468.7 1073.9,486.7 1049.8,453.6" fill="#989898" stroke="#989898" stroke-width="1.1" stroke-linejoin="round"/><polygon points="1084.7,468.7 1103.7,501.1 1073.9,486.7" fill="#949494" stroke="#949494" stroke-width="1.1" stroke-linejoin="round"/><polygon points="781.6,337.2 827.0,340.8 781.6,341.2" fill="#b1b1b1" stroke="#b1b1b1" stroke-width="1.1" stroke-linejoin="round"/><polygon points="827.0,340.8 827.5,347.5 781.6,341.2" fill="#b2b2b2" stroke="#b2b2b2" stroke-width="1.1" stroke-linejoin="round"/><polygon points="827.0,340.8 876.3,350.4 827.5,347.5" fill="#aeaeae" stroke="#aeaeae" stroke-width="1.1" stroke-linejoin="round"/><polygon points="876.3,350.4 876.8,360.6 827.5,347.5" fill="#afafaf" stroke="#afafaf" stroke-width="1.1" stroke-linejoin="round"/><polygon points="876.3,350.4 926.8,367.1 876.8,360.6" fill="#ababab" stroke="#ababab" stroke-width="1.1" stroke-linejoin="round"/><polygon points="926.8,367.1 926.3,381.2 876.8,360.6" fill="#ababab" stroke="#ababab" stroke-width="1.1" stroke-linejoin="round"/><polygon points="926.8,367.1 974.8,391.1 926.3,381.2" fill="#a7a7a7" stroke="#a7a7a7" stroke-width="1.1" stroke-linejoin="round"/><polygon points="974.8,391.1 972.1,408.7 926.3,381.2" fill="#a8a8a8" stroke="#a8a8a8" stroke-width="1.1" stroke-linejoin="round"/><polygon points="974.8,391.1 1016.6,420.8 972.1,408.7" fill="#a3a3a3" stroke="#a3a3a3" stroke-width="1.1" stroke-linejoin="round"/><polygon points="1016.6,420.8 1010.5,440.5 972.1,408.7" fill="#a4a4a4" stroke="#a4a4a4" stroke-width="1.1" stroke-linejoin="round"/><polygon points="1016.6,420.8 1049.8,453.6 1010.5,440.5" fill="#9f9f9f" stroke="#9f9f9f" stroke-width="1.1" stroke-linejoin="round"/><polygon points="1049.8,453.6 1040.2,473.7 1010.5,440.5" fill="#a0a0a0" stroke="#a0a0a0" stroke-width="1.1" stroke-linejoin="round"/><polygon points="1049.8,453.6 1073.9,486.7 1040.2,473.7" fill="#9c9c9c" stroke="#9c9c9c" stroke-width="1.1" stroke-linejoin="round"/><polygon points="781.6,341.2 827.5,347.5 781.6,348.5" fill="#b4b4b4" stroke="#b4b4b4" stroke-width="1.1" stroke-linejoin="round"/><polygon points="827.5,347.5 827.9,358.2 781.6,348.5" fill="#b4b4b4" stroke="#b4b4b4" stroke-width="1.1" stroke-linejoin="round"/><polygon points="827.5,347.5 876.8,360.6 827.9,358.2" fill="#b1b1b1" stroke="#b1b1b1" stroke-width="1.1" stroke-linejoin="round"/><polygon points="876.8,360.6 876.8,375.3 827.9,358.2" fill="#b1b1b1" stroke="#b1b1b1" stroke-width="1.1" stroke-linejoin="round"/><polygon points="876.8,360.6 926.3,381.2 876.8,375.3" fill="#adadad" stroke="#adadad" stroke-width="1.1" stroke-linejoin="round"/><polygon points="926.3,381.2 924.8,399.7 876.8,375.3" fill="#aeaeae" stroke="#aeaeae" stroke-width="1.1" stroke-linejoin="round"/><polygon points="926.3,381.2 972.1,408.7 924.8,399.7" fill="#aaaaaa" stroke="#aaaaaa" stroke-width="1.1" stroke-linejoin="round"/><polygon points="972.1,408.7 967.7,429.7 924.8,399.7" fill="#aaaaaa" stroke="#aaaaaa" stroke-width="1.1" stroke-linejoin="round"/><polygon points="972.1,408.7 1010.5,440.5 967.7,429.7" fill="#a6a6a6" stroke="#a6a6a6" stroke-width="1.1" stroke-linejoin="round"/><polygon points="1010.5,440.5 1002.9,462.4 967.7,429.7" fill="#a6a6a6" stroke="#a6a6a6" stroke-width="1.1" stroke-linejoin="round"/><polygon points="1010.5,440.5 1040.2,473.7 1002.9,462.4" fill="#a2a2a2" stroke="#a2a2a2" stroke-width="1.1" stroke-linejoin="round"/><polygon points="781.6,348.5 827.9,358.2 781.6,359.2" fill="#b5b5b5" stroke="#b5b5b5" stroke-width="1.1" stroke-linejoin="round"/><polygon points="827.9,358.2 828.1,372.8 781.6,359.2" fill="#b6b6b6" stroke="#b6b6b6" stroke-width="1.1" stroke-linejoin="round"/><polygon points="827.9,358.2 876.8,375.3 828.1,372.8" fill="#b2b2b2" stroke="#b2b2b2" stroke-width="1.1" stroke-linejoin="round"/><polygon points="876.8,375.3 876.4,393.9 828.1,372.8" fill="#b3b3b3" stroke="#b3b3b3" stroke-width="1.1" stroke-linejoin="round"/><polygon points="876.8,375.3 924.8,399.7 876.4,393.9" fill="#afafaf" stroke="#afafaf" stroke-width="1.1" stroke-linejoin="round"/><polygon points="924.8,399.7 922.4,421.4 876.4,393.9" fill="#afafaf" stroke="#afafaf" stroke-width="1.1" stroke-linejoin="round"/><polygon points="924.8,399.7 967.7,429.7 922.4,421.4" fill="#ababab" stroke="#ababab" stroke-width="1.1" stroke-linejoin="round"/><polygon points="967.7,429.7 962.5,452.8 922.4,421.4" fill="#acacac" stroke="#acacac" stroke-width="1.1" stroke-linejoin="round"/><polygon points="967.7,429.7 1002.9,462.4 962.5,452.8" fill="#a8a8a8" stroke="#a8a8a8" stroke-width="1.1" stroke-linejoin="round"/><polygon points="781.6,359.2 828.1,372.8 781.6,373.3" fill="#b7b7b7" stroke="#b7b7b7" stroke-width="1.1" stroke-linejoin="round"/><polygon points="828.1,372.8 828.3,391.0 781.6,373.3" fill="#b7b7b7" stroke="#b7b7b7" stroke-width="1.1" stroke-linejoin="round"/><polygon points="828.1,372.8 876.4,393.9 828.3,391.0" fill="#b3b3b3" stroke="#b3b3b3" stroke-width="1.1" stroke-linejoin="round"/><polygon points="876.4,393.9 875.6,415.6 828.3,391.0" fill="#b4b4b4" stroke="#b4b4b4" stroke-width="1.1" stroke-linejoin="round"/><polygon points="876.4,393.9 922.4,421.4 875.6,415.6" fill="#b0b0b0" stroke="#b0b0b0" stroke-width="1.1" stroke-linejoin="round"/><polygon points="922.4,421.4 919.6,445.3 875.6,415.6" fill="#b0b0b0" stroke="#b0b0b0" stroke-width="1.1" stroke-linejoin="round"/><polygon points="922.4,421.4 962.5,452.8 919.6,445.3" fill="#acacac" stroke="#acacac" stroke-width="1.1" stroke-linejoin="round"/><polygon points="781.6,373.3 828.3,391.0 781.6,390.8" fill="#b7b7b7" stroke="#b7b7b7" stroke-width="1.1" stroke-linejoin="round"/><polygon points="828.3,391.0 828.4,412.4 781.6,390.8" fill="#b8b8b8" stroke="#b8b8b8" stroke-width="1.1" stroke-linejoin="round"/><polygon points="828.3,391.0 875.6,415.6 828.4,412.4" fill="#b4b4b4" stroke="#b4b4b4" stroke-width="1.1" stroke-linejoin="round"/><polygon points="875.6,415.6 874.7,439.8 828.4,412.4" fill="#b5b5b5" stroke="#b5b5b5" stroke-width="1.1" stroke-linejoin="round"/><polygon points="875.6,415.6 919.6,445.3 874.7,439.8" fill="#b1b1b1" stroke="#b1b1b1" stroke-width="1.1" stroke-linejoin="round"/><polygon points="781.6,390.8 828.4,412.4 781.6,411.5" fill="#b8b8b8" stroke="#b8b8b8" stroke-width="1.1" stroke-linejoin="round"/><polygon points="828.4,412.4 828.5,436.5 781.6,411.5" fill="#b8b8b8" stroke="#b8b8b8" stroke-width="1.1" stroke-linejoin="round"/><polygon points="828.4,412.4 874.7,439.8 828.5,436.5" fill="#b5b5b5" stroke="#b5b5b5" stroke-width="1.1" stroke-linejoin="round"/><polygon points="781.6,411.5 828.5,436.5 781.6,435.3" fill="#b8b8b8" stroke="#b8b8b8" stroke-width="1.1" stroke-linejoin="round"/><polygon points="381.1,587.1 388.9,560.6 386.9,568.8" fill="#c3c3c3" stroke="#c3c3c3" stroke-width="1.1" stroke-linejoin="round"/><polygon points="388.9,560.6 395.1,541.5 386.9,568.8" fill="#c3c3c3" stroke="#c3c3c3" stroke-width="1.1" stroke-linejoin="round"/><polygon points="386.9,568.8 395.1,541.5 397.7,550.9" fill="#cbcbcb" stroke="#cbcbcb" stroke-width="1.1" stroke-linejoin="round"/><polygon points="395.1,541.5 407.1,522.3 397.7,550.9" fill="#cbcbcb" stroke="#cbcbcb" stroke-width="1.1" stroke-linejoin="round"/><polygon points="395.1,541.5 409.1,514.0 407.1,522.3" fill="#cacaca" stroke="#cacaca" stroke-width="1.1" stroke-linejoin="round"/><polygon points="409.1,514.0 423.0,493.2 407.1,522.3" fill="#cacaca" stroke="#cacaca" stroke-width="1.1" stroke-linejoin="round"/><polygon points="397.7,550.9 407.1,522.3 413.5,533.4" fill="#cecece" stroke="#cecece" stroke-width="1.1" stroke-linejoin="round"/><polygon points="407.1,522.3 425.1,503.5 413.5,533.4" fill="#cfcfcf" stroke="#cfcfcf" stroke-width="1.1" stroke-linejoin="round"/><polygon points="407.1,522.3 423.0,493.2 425.1,503.5" fill="#cecece" stroke="#cecece" stroke-width="1.1" stroke-linejoin="round"/><polygon points="423.0,493.2 443.9,472.8 425.1,503.5" fill="#cecece" stroke="#cecece" stroke-width="1.1" stroke-linejoin="round"/><polygon points="423.0,493.2 446.0,464.5 443.9,472.8" fill="#cccccc" stroke="#cccccc" stroke-width="1.1" stroke-linejoin="round"/><polygon points="446.0,464.5 470.7,442.6 443.9,472.8" fill="#cccccc" stroke="#cccccc" stroke-width="1.1" stroke-linejoin="round"/><polygon points="446.0,464.5 476.1,437.3 470.7,442.6" fill="#cacaca" stroke="#cacaca" stroke-width="1.1" stroke-linejoin="round"/><polygon points="476.1,437.3 505.6,414.5 470.7,442.6" fill="#c9c9c9" stroke="#c9c9c9" stroke-width="1.1" stroke-linejoin="round"/><polygon points="413.5,533.4 425.1,503.5 434.3,516.7" fill="#d0d0d0" stroke="#d0d0d0" stroke-width="1.1" stroke-linejoin="round"/><polygon points="425.1,503.5 449.0,485.5 434.3,516.7" fill="#d0d0d0" stroke="#d0d0d0" stroke-width="1.1" stroke-linejoin="round"/><polygon points="425.1,503.5 443.9,472.8 449.0,485.5" fill="#cfcfcf" stroke="#cfcfcf" stroke-width="1.1" stroke-linejoin="round"/><polygon points="443.9,472.8 471.8,453.4 449.0,485.5" fill="#cfcfcf" stroke="#cfcfcf" stroke-width="1.1" stroke-linejoin="round"/><polygon points="443.9,472.8 470.7,442.6 471.8,453.4" fill="#cdcdcd" stroke="#cdcdcd" stroke-width="1.1" stroke-linejoin="round"/><polygon points="470.7,442.6 503.4,422.4 471.8,453.4" fill="#cccccc" stroke="#cccccc" stroke-width="1.1" stroke-linejoin="round"/><polygon points="470.7,442.6 505.6,414.5 503.4,422.4" fill="#cacaca" stroke="#cacaca" stroke-width="1.1" stroke-linejoin="round"/><polygon points="505.6,414.5 543.3,394.4 503.4,422.4" fill="#c9c9c9" stroke="#c9c9c9" stroke-width="1.1" stroke-linejoin="round"/><polygon points="505.6,414.5 547.3,390.1 543.3,394.4" fill="#c7c7c7" stroke="#c7c7c7" stroke-width="1.1" stroke-linejoin="round"/><polygon points="547.3,390.1 589.7,371.5 543.3,394.4" fill="#c5c5c5" stroke="#c5c5c5" stroke-width="1.1" stroke-linejoin="round"/><polygon points="434.3,516.7 449.0,485.5 459.6,501.1" fill="#cfcfcf" stroke="#cfcfcf" stroke-width="1.1" stroke-linejoin="round"/><polygon points="449.0,485.5 478.6,468.7 459.6,501.1" fill="#cfcfcf" stroke="#cfcfcf" stroke-width="1.1" stroke-linejoin="round"/><polygon points="449.0,485.5 471.8,453.4 478.6,468.7" fill="#cecece" stroke="#cecece" stroke-width="1.1" stroke-linejoin="round"/><polygon points="471.8,453.4 506.4,435.9 478.6,468.7" fill="#cdcdcd" stroke="#cdcdcd" stroke-width="1.1" stroke-linejoin="round"/><polygon points="471.8,453.4 503.4,422.4 506.4,435.9" fill="#cccccc" stroke="#cccccc" stroke-width="1.1" stroke-linejoin="round"/><polygon points="503.4,422.4 543.2,405.0 506.4,435.9" fill="#cbcbcb" stroke="#cbcbcb" stroke-width="1.1" stroke-linejoin="round"/><polygon points="503.4,422.4 543.3,394.4 543.2,405.0" fill="#c9c9c9" stroke="#c9c9c9" stroke-width="1.1" stroke-linejoin="round"/><polygon points="543.3,394.4 587.8,378.4 543.2,405.0" fill="#c7c7c7" stroke="#c7c7c7" stroke-width="1.1" stroke-linejoin="round"/><polygon points="543.3,394.4 589.7,371.5 587.8,378.4" fill="#c5c5c5" stroke="#c5c5c5" stroke-width="1.1" stroke-linejoin="round"/><polygon points="589.7,371.5 637.3,358.2 587.8,378.4" fill="#c3c3c3" stroke="#c3c3c3" stroke-width="1.1" stroke-linejoin="round"/><polygon points="589.7,371.5 639.5,354.8 637.3,358.2" fill="#c0c0c0" stroke="#c0c0c0" stroke-width="1.1" stroke-linejoin="round"/><polygon points="639.5,354.8 688.1,344.9 637.3,358.2" fill="#bdbdbd" stroke="#bdbdbd" stroke-width="1.1" stroke-linejoin="round"/><polygon points="639.5,354.8 689.7,344.4 688.1,344.9" fill="#bababa" stroke="#bababa" stroke-width="1.1" stroke-linejoin="round"/><polygon points="689.7,344.4 736.9,338.1 688.1,344.9" fill="#b7b7b7" stroke="#b7b7b7" stroke-width="1.1" stroke-linejoin="round"/><polygon points="459.6,501.1 478.6,468.7 489.4,486.7" fill="#cecece" stroke="#cecece" stroke-width="1.1" stroke-linejoin="round"/><polygon points="478.6,468.7 513.4,453.6 489.4,486.7" fill="#cdcdcd" stroke="#cdcdcd" stroke-width="1.1" stroke-linejoin="round"/><polygon points="478.6,468.7 506.4,435.9 513.4,453.6" fill="#cdcdcd" stroke="#cdcdcd" stroke-width="1.1" stroke-linejoin="round"/><polygon points="506.4,435.9 546.6,420.8 513.4,453.6" fill="#cbcbcb" stroke="#cbcbcb" stroke-width="1.1" stroke-linejoin="round"/><polygon points="506.4,435.9 543.2,405.0 546.6,420.8" fill="#cacaca" stroke="#cacaca" stroke-width="1.1" stroke-linejoin="round"/><polygon points="543.2,405.0 588.5,391.1 546.6,420.8" fill="#c8c8c8" stroke="#c8c8c8" stroke-width="1.1" stroke-linejoin="round"/><polygon points="543.2,405.0 587.8,378.4 588.5,391.1" fill="#c7c7c7" stroke="#c7c7c7" stroke-width="1.1" stroke-linejoin="round"/><polygon points="587.8,378.4 636.5,367.1 588.5,391.1" fill="#c4c4c4" stroke="#c4c4c4" stroke-width="1.1" stroke-linejoin="round"/><polygon points="587.8,378.4 637.3,358.2 636.5,367.1" fill="#c2c2c2" stroke="#c2c2c2" stroke-width="1.1" stroke-linejoin="round"/><polygon points="637.3,358.2 687.0,350.4 636.5,367.1" fill="#c0c0c0" stroke="#c0c0c0" stroke-width="1.1" stroke-linejoin="round"/><polygon points="637.3,358.2 688.1,344.9 687.0,350.4" fill="#bdbdbd" stroke="#bdbdbd" stroke-width="1.1" stroke-linejoin="round"/><polygon points="688.1,344.9 736.3,340.8 687.0,350.4" fill="#bababa" stroke="#bababa" stroke-width="1.1" stroke-linejoin="round"/><polygon points="688.1,344.9 736.9,338.1 736.3,340.8" fill="#b8b8b8" stroke="#b8b8b8" stroke-width="1.1" stroke-linejoin="round"/><polygon points="736.9,338.1 781.6,337.2 736.3,340.8" fill="#b5b5b5" stroke="#b5b5b5" stroke-width="1.1" stroke-linejoin="round"/><polygon points="736.9,338.1 781.6,336.4 781.6,337.2" fill="#b2b2b2" stroke="#b2b2b2" stroke-width="1.1" stroke-linejoin="round"/><polygon points="489.4,486.7 513.4,453.6 523.1,473.7" fill="#cccccc" stroke="#cccccc" stroke-width="1.1" stroke-linejoin="round"/><polygon points="513.4,453.6 552.7,440.5 523.1,473.7" fill="#cbcbcb" stroke="#cbcbcb" stroke-width="1.1" stroke-linejoin="round"/><polygon points="513.4,453.6 546.6,420.8 552.7,440.5" fill="#cacaca" stroke="#cacaca" stroke-width="1.1" stroke-linejoin="round"/><polygon points="546.6,420.8 591.2,408.7 552.7,440.5" fill="#c8c8c8" stroke="#c8c8c8" stroke-width="1.1" stroke-linejoin="round"/><polygon points="546.6,420.8 588.5,391.1 591.2,408.7" fill="#c7c7c7" stroke="#c7c7c7" stroke-width="1.1" stroke-linejoin="round"/><polygon points="588.5,391.1 636.9,381.2 591.2,408.7" fill="#c5c5c5" stroke="#c5c5c5" stroke-width="1.1" stroke-linejoin="round"/><polygon points="588.5,391.1 636.5,367.1 636.9,381.2" fill="#c4c4c4" stroke="#c4c4c4" stroke-width="1.1" stroke-linejoin="round"/><polygon points="636.5,367.1 686.5,360.6 636.9,381.2" fill="#c1c1c1" stroke="#c1c1c1" stroke-width="1.1" stroke-linejoin="round"/><polygon points="636.5,367.1 687.0,350.4 686.5,360.6" fill="#bfbfbf" stroke="#bfbfbf" stroke-width="1.1" stroke-linejoin="round"/><polygon points="687.0,350.4 735.8,347.5 686.5,360.6" fill="#bcbcbc" stroke="#bcbcbc" stroke-width="1.1" stroke-linejoin="round"/><polygon points="687.0,350.4 736.3,340.8 735.8,347.5" fill="#bababa" stroke="#bababa" stroke-width="1.1" stroke-linejoin="round"/><polygon points="736.3,340.8 781.6,341.2 735.8,347.5" fill="#b7b7b7" stroke="#b7b7b7" stroke-width="1.1" stroke-linejoin="round"/><polygon points="736.3,340.8 781.6,337.2 781.6,341.2" fill="#b5b5b5" stroke="#b5b5b5" stroke-width="1.1" stroke-linejoin="round"/><polygon points="523.1,473.7 552.7,440.5 560.4,462.4" fill="#cacaca" stroke="#cacaca" stroke-width="1.1" stroke-linejoin="round"/><polygon points="552.7,440.5 595.6,429.7 560.4,462.4" fill="#c8c8c8" stroke="#c8c8c8" stroke-width="1.1" stroke-linejoin="round"/><polygon points="552.7,440.5 591.2,408.7 595.6,429.7" fill="#c8c8c8" stroke="#c8c8c8" stroke-width="1.1" stroke-linejoin="round"/><polygon points="591.2,408.7 638.5,399.7 595.6,429.7" fill="#c5c5c5" stroke="#c5c5c5" stroke-width="1.1" stroke-linejoin="round"/><polygon points="591.2,408.7 636.9,381.2 638.5,399.7" fill="#c4c4c4" stroke="#c4c4c4" stroke-width="1.1" stroke-linejoin="round"/><polygon points="636.9,381.2 686.5,375.3 638.5,399.7" fill="#c2c2c2" stroke="#c2c2c2" stroke-width="1.1" stroke-linejoin="round"/><polygon points="636.9,381.2 686.5,360.6 686.5,375.3" fill="#c0c0c0" stroke="#c0c0c0" stroke-width="1.1" stroke-linejoin="round"/><polygon points="686.5,360.6 735.4,358.2 686.5,375.3" fill="#bebebe" stroke="#bebebe" stroke-width="1.1" stroke-linejoin="round"/><polygon points="686.5,360.6 735.8,347.5 735.4,358.2" fill="#bcbcbc" stroke="#bcbcbc" stroke-width="1.1" stroke-linejoin="round"/><polygon points="735.8,347.5 781.6,348.5 735.4,358.2" fill="#b9b9b9" stroke="#b9b9b9" stroke-width="1.1" stroke-linejoin="round"/><polygon points="735.8,347.5 781.6,341.2 781.6,348.5" fill="#b7b7b7" stroke="#b7b7b7" stroke-width="1.1" stroke-linejoin="round"/><polygon points="560.4,462.4 595.6,429.7 600.8,452.8" fill="#c7c7c7" stroke="#c7c7c7" stroke-width="1.1" stroke-linejoin="round"/><polygon points="595.6,429.7 640.9,421.4 600.8,452.8" fill="#c5c5c5" stroke="#c5c5c5" stroke-width="1.1" stroke-linejoin="round"/><polygon points="595.6,429.7 638.5,399.7 640.9,421.4" fill="#c5c5c5" stroke="#c5c5c5" stroke-width="1.1" stroke-linejoin="round"/><polygon points="638.5,399.7 686.9,393.9 640.9,421.4" fill="#c2c2c2" stroke="#c2c2c2" stroke-width="1.1" stroke-linejoin="round"/><polygon points="638.5,399.7 686.5,375.3 686.9,393.9" fill="#c1c1c1" stroke="#c1c1c1" stroke-width="1.1" stroke-linejoin="round"/><polygon points="686.5,375.3 735.1,372.8 686.9,393.9" fill="#bebebe" stroke="#bebebe" stroke-width="1.1" stroke-linejoin="round"/><polygon points="686.5,375.3 735.4,358.2 735.1,372.8" fill="#bdbdbd" stroke="#bdbdbd" stroke-width="1.1" stroke-linejoin="round"/><polygon points="735.4,358.2 781.6,359.2 735.1,372.8" fill="#bababa" stroke="#bababa" stroke-width="1.1" stroke-linejoin="round"/><polygon points="735.4,358.2 781.6,348.5 781.6,359.2" fill="#b9b9b9" stroke="#b9b9b9" stroke-width="1.1" stroke-linejoin="round"/><polygon points="600.8,452.8 640.9,421.4 643.7,445.3" fill="#c5c5c5" stroke="#c5c5c5" stroke-width="1.1" stroke-linejoin="round"/><polygon points="640.9,421.4 687.6,415.6 643.7,445.3" fill="#c2c2c2" stroke="#c2c2c2" stroke-width="1.1" stroke-linejoin="round"/><polygon points="640.9,421.4 686.9,393.9 687.6,415.6" fill="#c2c2c2" stroke="#c2c2c2" stroke-width="1.1" stroke-linejoin="round"/><polygon points="686.9,393.9 735.0,391.0 687.6,415.6" fill="#bfbfbf" stroke="#bfbfbf" stroke-width="1.1" stroke-linejoin="round"/><polygon points="686.9,393.9 735.1,372.8 735.0,391.0" fill="#bebebe" stroke="#bebebe" stroke-width="1.1" stroke-linejoin="round"/><polygon points="735.1,372.8 781.6,373.3 735.0,391.0" fill="#bbbbbb" stroke="#bbbbbb" stroke-width="1.1" stroke-linejoin="round"/><polygon points="735.1,372.8 781.6,359.2 781.6,373.3" fill="#bababa" stroke="#bababa" stroke-width="1.1" stroke-linejoin="round"/><polygon points="643.7,445.3 687.6,415.6 688.6,439.8" fill="#c2c2c2" stroke="#c2c2c2" stroke-width="1.1" stroke-linejoin="round"/><polygon points="687.6,415.6 734.8,412.4 688.6,439.8" fill="#bfbfbf" stroke="#bfbfbf" stroke-width="1.1" stroke-linejoin="round"/><polygon points="687.6,415.6 735.0,391.0 734.8,412.4" fill="#bebebe" stroke="#bebebe" stroke-width="1.1" stroke-linejoin="round"/><polygon points="735.0,391.0 781.6,390.8 734.8,412.4" fill="#bbbbbb" stroke="#bbbbbb" stroke-width="1.1" stroke-linejoin="round"/><polygon points="735.0,391.0 781.6,373.3 781.6,390.8" fill="#bbbbbb" stroke="#bbbbbb" stroke-width="1.1" stroke-linejoin="round"/><polygon points="688.6,439.8 734.8,412.4 734.8,436.5" fill="#bfbfbf" stroke="#bfbfbf" stroke-width="1.1" stroke-linejoin="round"/><polygon points="734.8,412.4 781.6,411.5 734.8,436.5" fill="#bcbcbc" stroke="#bcbcbc" stroke-width="1.1" stroke-linejoin="round"/><polygon points="734.8,412.4 781.6,390.8 781.6,411.5" fill="#bbbbbb" stroke="#bbbbbb" stroke-width="1.1" stroke-linejoin="round"/><polygon points="734.8,436.5 781.6,411.5 781.6,435.3" fill="#bcbcbc" stroke="#bcbcbc" stroke-width="1.1" stroke-linejoin="round"/><polygon points="781.6,871.3 731.0,869.4 781.6,850.1" fill="#828282" stroke="#828282" stroke-width="1.1" stroke-linejoin="round"/><polygon points="731.0,869.4 730.2,847.9 781.6,850.1" fill="#828282" stroke="#828282" stroke-width="1.1" stroke-linejoin="round"/><polygon points="731.0,869.4 681.3,863.8 730.2,847.9" fill="#898989" stroke="#898989" stroke-width="1.1" stroke-linejoin="round"/><polygon points="681.3,863.8 678.4,841.7 730.2,847.9" fill="#8a8a8a" stroke="#8a8a8a" stroke-width="1.1" stroke-linejoin="round"/><polygon points="681.3,863.8 633.2,854.6 678.4,841.7" fill="#8f8f8f" stroke="#8f8f8f" stroke-width="1.1" stroke-linejoin="round"/><polygon points="633.2,854.6 627.4,831.3 678.4,841.7" fill="#919191" stroke="#919191" stroke-width="1.1" stroke-linejoin="round"/><polygon points="633.2,854.6 587.7,842.0 627.4,831.3" fill="#959595" stroke="#959595" stroke-width="1.1" stroke-linejoin="round"/><polygon points="587.7,842.0 578.6,816.9 627.4,831.3" fill="#989898" stroke="#989898" stroke-width="1.1" stroke-linejoin="round"/><polygon points="587.7,842.0 545.5,826.2 578.6,816.9" fill="#9a9a9a" stroke="#9a9a9a" stroke-width="1.1" stroke-linejoin="round"/><polygon points="545.5,826.2 533.1,798.7 578.6,816.9" fill="#9f9f9f" stroke="#9f9f9f" stroke-width="1.1" stroke-linejoin="round"/><polygon points="545.5,826.2 507.1,807.7 533.1,798.7" fill="#9f9f9f" stroke="#9f9f9f" stroke-width="1.1" stroke-linejoin="round"/><polygon points="507.1,807.7 492.3,777.1 533.1,798.7" fill="#a5a5a5" stroke="#a5a5a5" stroke-width="1.1" stroke-linejoin="round"/><polygon points="507.1,807.7 473.2,786.6 492.3,777.1" fill="#a4a4a4" stroke="#a4a4a4" stroke-width="1.1" stroke-linejoin="round"/><polygon points="473.2,786.6 457.0,752.7 492.3,777.1" fill="#aaaaaa" stroke="#aaaaaa" stroke-width="1.1" stroke-linejoin="round"/><polygon points="473.2,786.6 444.1,763.6 457.0,752.7" fill="#a9a9a9" stroke="#a9a9a9" stroke-width="1.1" stroke-linejoin="round"/><polygon points="444.1,763.6 428.1,726.2 457.0,752.7" fill="#afafaf" stroke="#afafaf" stroke-width="1.1" stroke-linejoin="round"/><polygon points="444.1,763.6 420.1,738.9 428.1,726.2" fill="#adadad" stroke="#adadad" stroke-width="1.1" stroke-linejoin="round"/><polygon points="420.1,738.9 405.9,698.4 428.1,726.2" fill="#b2b2b2" stroke="#b2b2b2" stroke-width="1.1" stroke-linejoin="round"/><polygon points="420.1,738.9 401.5,713.0 405.9,698.4" fill="#b0b0b0" stroke="#b0b0b0" stroke-width="1.1" stroke-linejoin="round"/><polygon points="401.5,713.0 390.4,669.9 405.9,698.4" fill="#b5b5b5" stroke="#b5b5b5" stroke-width="1.1" stroke-linejoin="round"/><polygon points="401.5,713.0 388.2,686.3 390.4,669.9" fill="#b3b3b3" stroke="#b3b3b3" stroke-width="1.1" stroke-linejoin="round"/><polygon points="388.2,686.3 381.5,641.6 390.4,669.9" fill="#b7b7b7" stroke="#b7b7b7" stroke-width="1.1" stroke-linejoin="round"/><polygon points="388.2,686.3 380.4,659.3 381.5,641.6" fill="#b6b6b6" stroke="#b6b6b6" stroke-width="1.1" stroke-linejoin="round"/><polygon points="380.4,659.3 378.6,613.8 381.5,641.6" fill="#b8b8b8" stroke="#b8b8b8" stroke-width="1.1" stroke-linejoin="round"/><polygon points="380.4,659.3 377.9,632.2 378.6,613.8" fill="#b7b7b7" stroke="#b7b7b7" stroke-width="1.1" stroke-linejoin="round"/><polygon points="781.6,850.1 730.2,847.9 781.6,825.3" fill="#909090" stroke="#909090" stroke-width="1.1" stroke-linejoin="round"/><polygon points="730.2,847.9 729.4,822.0 781.6,825.3" fill="#919191" stroke="#919191" stroke-width="1.1" stroke-linejoin="round"/><polygon points="730.2,847.9 678.4,841.7 729.4,822.0" fill="#979797" stroke="#979797" stroke-width="1.1" stroke-linejoin="round"/><polygon points="678.4,841.7 675.7,814.3 729.4,822.0" fill="#999999" stroke="#999999" stroke-width="1.1" stroke-linejoin="round"/><polygon points="678.4,841.7 627.4,831.3 675.7,814.3" fill="#9d9d9d" stroke="#9d9d9d" stroke-width="1.1" stroke-linejoin="round"/><polygon points="627.4,831.3 622.1,802.1 675.7,814.3" fill="#a0a0a0" stroke="#a0a0a0" stroke-width="1.1" stroke-linejoin="round"/><polygon points="627.4,831.3 578.6,816.9 622.1,802.1" fill="#a4a4a4" stroke="#a4a4a4" stroke-width="1.1" stroke-linejoin="round"/><polygon points="578.6,816.9 570.2,785.2 622.1,802.1" fill="#a7a7a7" stroke="#a7a7a7" stroke-width="1.1" stroke-linejoin="round"/><polygon points="578.6,816.9 533.1,798.7 570.2,785.2" fill="#aaaaaa" stroke="#aaaaaa" stroke-width="1.1" stroke-linejoin="round"/><polygon points="533.1,798.7 522.3,763.9 570.2,785.2" fill="#aeaeae" stroke="#aeaeae" stroke-width="1.1" stroke-linejoin="round"/><polygon points="533.1,798.7 492.3,777.1 522.3,763.9" fill="#afafaf" stroke="#afafaf" stroke-width="1.1" stroke-linejoin="round"/><polygon points="492.3,777.1 480.0,738.9 522.3,763.9" fill="#b4b4b4" stroke="#b4b4b4" stroke-width="1.1" stroke-linejoin="round"/><polygon points="492.3,777.1 457.0,752.7 480.0,738.9" fill="#b4b4b4" stroke="#b4b4b4" stroke-width="1.1" stroke-linejoin="round"/><polygon points="457.0,752.7 445.0,711.2 480.0,738.9" fill="#bababa" stroke="#bababa" stroke-width="1.1" stroke-linejoin="round"/><polygon points="457.0,752.7 428.1,726.2 445.0,711.2" fill="#b9b9b9" stroke="#b9b9b9" stroke-width="1.1" stroke-linejoin="round"/><polygon points="428.1,726.2 418.2,681.9 445.0,711.2" fill="#bebebe" stroke="#bebebe" stroke-width="1.1" stroke-linejoin="round"/><polygon points="428.1,726.2 405.9,698.4 418.2,681.9" fill="#bcbcbc" stroke="#bcbcbc" stroke-width="1.1" stroke-linejoin="round"/><polygon points="405.9,698.4 399.5,652.2 418.2,681.9" fill="#c1c1c1" stroke="#c1c1c1" stroke-width="1.1" stroke-linejoin="round"/><polygon points="405.9,698.4 390.4,669.9 399.5,652.2" fill="#bfbfbf" stroke="#bfbfbf" stroke-width="1.1" stroke-linejoin="round"/><polygon points="390.4,669.9 388.7,623.0 399.5,652.2" fill="#c3c3c3" stroke="#c3c3c3" stroke-width="1.1" stroke-linejoin="round"/><polygon points="390.4,669.9 381.5,641.6 388.7,623.0" fill="#c2c2c2" stroke="#c2c2c2" stroke-width="1.1" stroke-linejoin="round"/><polygon points="381.5,641.6 384.8,595.1 388.7,623.0" fill="#c4c4c4" stroke="#c4c4c4" stroke-width="1.1" stroke-linejoin="round"/><polygon points="381.5,641.6 378.6,613.8 384.8,595.1" fill="#c3c3c3" stroke="#c3c3c3" stroke-width="1.1" stroke-linejoin="round"/><polygon points="378.6,613.8 386.9,568.8 384.8,595.1" fill="#c4c4c4" stroke="#c4c4c4" stroke-width="1.1" stroke-linejoin="round"/><polygon points="378.6,613.8 381.1,587.1 386.9,568.8" fill="#c3c3c3" stroke="#c3c3c3" stroke-width="1.1" stroke-linejoin="round"/><polygon points="781.6,825.3 729.4,822.0 781.6,797.2" fill="#9c9c9c" stroke="#9c9c9c" stroke-width="1.1" stroke-linejoin="round"/><polygon points="729.4,822.0 728.8,791.9 781.6,797.2" fill="#9e9e9e" stroke="#9e9e9e" stroke-width="1.1" stroke-linejoin="round"/><polygon points="729.4,822.0 675.7,814.3 728.8,791.9" fill="#a3a3a3" stroke="#a3a3a3" stroke-width="1.1" stroke-linejoin="round"/><polygon points="675.7,814.3 673.5,781.9 728.8,791.9" fill="#a5a5a5" stroke="#a5a5a5" stroke-width="1.1" stroke-linejoin="round"/><polygon points="675.7,814.3 622.1,802.1 673.5,781.9" fill="#a9a9a9" stroke="#a9a9a9" stroke-width="1.1" stroke-linejoin="round"/><polygon points="622.1,802.1 617.7,766.8 673.5,781.9" fill="#adadad" stroke="#adadad" stroke-width="1.1" stroke-linejoin="round"/><polygon points="622.1,802.1 570.2,785.2 617.7,766.8" fill="#b0b0b0" stroke="#b0b0b0" stroke-width="1.1" stroke-linejoin="round"/><polygon points="570.2,785.2 563.8,746.6 617.7,766.8" fill="#b4b4b4" stroke="#b4b4b4" stroke-width="1.1" stroke-linejoin="round"/><polygon points="570.2,785.2 522.3,763.9 563.8,746.6" fill="#b6b6b6" stroke="#b6b6b6" stroke-width="1.1" stroke-linejoin="round"/><polygon points="522.3,763.9 514.6,721.9 563.8,746.6" fill="#bababa" stroke="#bababa" stroke-width="1.1" stroke-linejoin="round"/><polygon points="522.3,763.9 480.0,738.9 514.6,721.9" fill="#bcbcbc" stroke="#bcbcbc" stroke-width="1.1" stroke-linejoin="round"/><polygon points="480.0,738.9 472.7,693.8 514.6,721.9" fill="#c0c0c0" stroke="#c0c0c0" stroke-width="1.1" stroke-linejoin="round"/><polygon points="480.0,738.9 445.0,711.2 472.7,693.8" fill="#c0c0c0" stroke="#c0c0c0" stroke-width="1.1" stroke-linejoin="round"/><polygon points="445.0,711.2 439.8,663.8 472.7,693.8" fill="#c5c5c5" stroke="#c5c5c5" stroke-width="1.1" stroke-linejoin="round"/><polygon points="445.0,711.2 418.2,681.9 439.8,663.8" fill="#c4c4c4" stroke="#c4c4c4" stroke-width="1.1" stroke-linejoin="round"/><polygon points="418.2,681.9 416.7,633.4 439.8,663.8" fill="#c8c8c8" stroke="#c8c8c8" stroke-width="1.1" stroke-linejoin="round"/><polygon points="418.2,681.9 399.5,652.2 416.7,633.4" fill="#c7c7c7" stroke="#c7c7c7" stroke-width="1.1" stroke-linejoin="round"/><polygon points="399.5,652.2 402.8,603.9 416.7,633.4" fill="#cacaca" stroke="#cacaca" stroke-width="1.1" stroke-linejoin="round"/><polygon points="399.5,652.2 388.7,623.0 402.8,603.9" fill="#c9c9c9" stroke="#c9c9c9" stroke-width="1.1" stroke-linejoin="round"/><polygon points="388.7,623.0 397.0,576.2 402.8,603.9" fill="#cbcbcb" stroke="#cbcbcb" stroke-width="1.1" stroke-linejoin="round"/><polygon points="388.7,623.0 384.8,595.1 397.0,576.2" fill="#cbcbcb" stroke="#cbcbcb" stroke-width="1.1" stroke-linejoin="round"/><polygon points="384.8,595.1 397.7,550.9 397.0,576.2" fill="#cbcbcb" stroke="#cbcbcb" stroke-width="1.1" stroke-linejoin="round"/><polygon points="384.8,595.1 386.9,568.8 397.7,550.9" fill="#cbcbcb" stroke="#cbcbcb" stroke-width="1.1" stroke-linejoin="round"/><polygon points="781.6,797.2 728.8,791.9 781.6,766.4" fill="#a5a5a5" stroke="#a5a5a5" stroke-width="1.1" stroke-linejoin="round"/><polygon points="728.8,791.9 728.4,758.1 781.6,766.4" fill="#a7a7a7" stroke="#a7a7a7" stroke-width="1.1" stroke-linejoin="round"/><polygon points="728.8,791.9 673.5,781.9 728.4,758.1" fill="#acacac" stroke="#acacac" stroke-width="1.1" stroke-linejoin="round"/><polygon points="673.5,781.9 672.1,744.8 728.4,758.1" fill="#aeaeae" stroke="#aeaeae" stroke-width="1.1" stroke-linejoin="round"/><polygon points="673.5,781.9 617.7,766.8 672.1,744.8" fill="#b2b2b2" stroke="#b2b2b2" stroke-width="1.1" stroke-linejoin="round"/><polygon points="617.7,766.8 614.9,726.1 672.1,744.8" fill="#b6b6b6" stroke="#b6b6b6" stroke-width="1.1" stroke-linejoin="round"/><polygon points="617.7,766.8 563.8,746.6 614.9,726.1" fill="#b9b9b9" stroke="#b9b9b9" stroke-width="1.1" stroke-linejoin="round"/><polygon points="563.8,746.6 560.2,702.4 614.9,726.1" fill="#bcbcbc" stroke="#bcbcbc" stroke-width="1.1" stroke-linejoin="round"/><polygon points="563.8,746.6 514.6,721.9 560.2,702.4" fill="#bfbfbf" stroke="#bfbfbf" stroke-width="1.1" stroke-linejoin="round"/><polygon points="514.6,721.9 511.5,674.6 560.2,702.4" fill="#c2c2c2" stroke="#c2c2c2" stroke-width="1.1" stroke-linejoin="round"/><polygon points="514.6,721.9 472.7,693.8 511.5,674.6" fill="#c4c4c4" stroke="#c4c4c4" stroke-width="1.1" stroke-linejoin="round"/><polygon points="472.7,693.8 471.9,644.5 511.5,674.6" fill="#c7c7c7" stroke="#c7c7c7" stroke-width="1.1" stroke-linejoin="round"/><polygon points="472.7,693.8 439.8,663.8 471.9,644.5" fill="#c8c8c8" stroke="#c8c8c8" stroke-width="1.1" stroke-linejoin="round"/><polygon points="439.8,663.8 442.9,613.9 471.9,644.5" fill="#cbcbcb" stroke="#cbcbcb" stroke-width="1.1" stroke-linejoin="round"/><polygon points="439.8,663.8 416.7,633.4 442.9,613.9" fill="#cbcbcb" stroke="#cbcbcb" stroke-width="1.1" stroke-linejoin="round"/><polygon points="416.7,633.4 424.4,584.6 442.9,613.9" fill="#cdcdcd" stroke="#cdcdcd" stroke-width="1.1" stroke-linejoin="round"/><polygon points="416.7,633.4 402.8,603.9 424.4,584.6" fill="#cdcdcd" stroke="#cdcdcd" stroke-width="1.1" stroke-linejoin="round"/><polygon points="402.8,603.9 415.3,557.6 424.4,584.6" fill="#cfcfcf" stroke="#cfcfcf" stroke-width="1.1" stroke-linejoin="round"/><polygon points="402.8,603.9 397.0,576.2 415.3,557.6" fill="#cecece" stroke="#cecece" stroke-width="1.1" stroke-linejoin="round"/><polygon points="397.0,576.2 413.5,533.4 415.3,557.6" fill="#cfcfcf" stroke="#cfcfcf" stroke-width="1.1" stroke-linejoin="round"/><polygon points="397.0,576.2 397.7,550.9 413.5,533.4" fill="#cfcfcf" stroke="#cfcfcf" stroke-width="1.1" stroke-linejoin="round"/><polygon points="781.6,766.4 728.4,758.1 781.6,733.4" fill="#acacac" stroke="#acacac" stroke-width="1.1" stroke-linejoin="round"/><polygon points="728.4,758.1 728.3,721.3 781.6,733.4" fill="#aeaeae" stroke="#aeaeae" stroke-width="1.1" stroke-linejoin="round"/><polygon points="728.4,758.1 672.1,744.8 728.3,721.3" fill="#b2b2b2" stroke="#b2b2b2" stroke-width="1.1" stroke-linejoin="round"/><polygon points="672.1,744.8 671.4,704.1 728.3,721.3" fill="#b5b5b5" stroke="#b5b5b5" stroke-width="1.1" stroke-linejoin="round"/><polygon points="672.1,744.8 614.9,726.1 671.4,704.1" fill="#b9b9b9" stroke="#b9b9b9" stroke-width="1.1" stroke-linejoin="round"/><polygon points="614.9,726.1 614.1,681.6 671.4,704.1" fill="#bbbbbb" stroke="#bbbbbb" stroke-width="1.1" stroke-linejoin="round"/><polygon points="614.9,726.1 560.2,702.4 614.1,681.6" fill="#bebebe" stroke="#bebebe" stroke-width="1.1" stroke-linejoin="round"/><polygon points="560.2,702.4 560.2,654.6 614.1,681.6" fill="#c1c1c1" stroke="#c1c1c1" stroke-width="1.1" stroke-linejoin="round"/><polygon points="560.2,702.4 511.5,674.6 560.2,654.6" fill="#c4c4c4" stroke="#c4c4c4" stroke-width="1.1" stroke-linejoin="round"/><polygon points="511.5,674.6 513.9,624.9 560.2,654.6" fill="#c6c6c6" stroke="#c6c6c6" stroke-width="1.1" stroke-linejoin="round"/><polygon points="511.5,674.6 471.9,644.5 513.9,624.9" fill="#c8c8c8" stroke="#c8c8c8" stroke-width="1.1" stroke-linejoin="round"/><polygon points="471.9,644.5 478.1,594.6 513.9,624.9" fill="#cbcbcb" stroke="#cbcbcb" stroke-width="1.1" stroke-linejoin="round"/><polygon points="471.9,644.5 442.9,613.9 478.1,594.6" fill="#cccccc" stroke="#cccccc" stroke-width="1.1" stroke-linejoin="round"/><polygon points="442.9,613.9 453.7,565.8 478.1,594.6" fill="#cdcdcd" stroke="#cdcdcd" stroke-width="1.1" stroke-linejoin="round"/><polygon points="442.9,613.9 424.4,584.6 453.7,565.8" fill="#cecece" stroke="#cecece" stroke-width="1.1" stroke-linejoin="round"/><polygon points="424.4,584.6 439.8,539.7 453.7,565.8" fill="#cfcfcf" stroke="#cfcfcf" stroke-width="1.1" stroke-linejoin="round"/><polygon points="424.4,584.6 415.3,557.6 439.8,539.7" fill="#d0d0d0" stroke="#d0d0d0" stroke-width="1.1" stroke-linejoin="round"/><polygon points="415.3,557.6 434.3,516.7 439.8,539.7" fill="#d0d0d0" stroke="#d0d0d0" stroke-width="1.1" stroke-linejoin="round"/><polygon points="415.3,557.6 413.5,533.4 434.3,516.7" fill="#d0d0d0" stroke="#d0d0d0" stroke-width="1.1" stroke-linejoin="round"/><polygon points="781.6,733.4 728.3,721.3 781.6,698.8" fill="#b1b1b1" stroke="#b1b1b1" stroke-width="1.1" stroke-linejoin="round"/><polygon points="728.3,721.3 728.4,682.5 781.6,698.8" fill="#b3b3b3" stroke="#b3b3b3" stroke-width="1.1" stroke-linejoin="round"/><polygon points="728.3,721.3 671.4,704.1 728.4,682.5" fill="#b7b7b7" stroke="#b7b7b7" stroke-width="1.1" stroke-linejoin="round"/><polygon points="671.4,704.1 671.8,661.2 728.4,682.5" fill="#b9b9b9" stroke="#b9b9b9" stroke-width="1.1" stroke-linejoin="round"/><polygon points="671.4,704.1 614.1,681.6 671.8,661.2" fill="#bcbcbc" stroke="#bcbcbc" stroke-width="1.1" stroke-linejoin="round"/><polygon points="614.1,681.6 615.5,635.2 671.8,661.2" fill="#bfbfbf" stroke="#bfbfbf" stroke-width="1.1" stroke-linejoin="round"/><polygon points="614.1,681.6 560.2,654.6 615.5,635.2" fill="#c2c2c2" stroke="#c2c2c2" stroke-width="1.1" stroke-linejoin="round"/><polygon points="560.2,654.6 563.9,606.2 615.5,635.2" fill="#c4c4c4" stroke="#c4c4c4" stroke-width="1.1" stroke-linejoin="round"/><polygon points="560.2,654.6 513.9,624.9 563.9,606.2" fill="#c7c7c7" stroke="#c7c7c7" stroke-width="1.1" stroke-linejoin="round"/><polygon points="513.9,624.9 521.4,576.4 563.9,606.2" fill="#c8c8c8" stroke="#c8c8c8" stroke-width="1.1" stroke-linejoin="round"/><polygon points="513.9,624.9 478.1,594.6 521.4,576.4" fill="#cacaca" stroke="#cacaca" stroke-width="1.1" stroke-linejoin="round"/><polygon points="478.1,594.6 490.2,548.1 521.4,576.4" fill="#cccccc" stroke="#cccccc" stroke-width="1.1" stroke-linejoin="round"/><polygon points="478.1,594.6 453.7,565.8 490.2,548.1" fill="#cdcdcd" stroke="#cdcdcd" stroke-width="1.1" stroke-linejoin="round"/><polygon points="453.7,565.8 470.1,522.8 490.2,548.1" fill="#cecece" stroke="#cecece" stroke-width="1.1" stroke-linejoin="round"/><polygon points="453.7,565.8 439.8,539.7 470.1,522.8" fill="#cfcfcf" stroke="#cfcfcf" stroke-width="1.1" stroke-linejoin="round"/><polygon points="439.8,539.7 459.6,501.1 470.1,522.8" fill="#cfcfcf" stroke="#cfcfcf" stroke-width="1.1" stroke-linejoin="round"/><polygon points="439.8,539.7 434.3,516.7 459.6,501.1" fill="#d0d0d0" stroke="#d0d0d0" stroke-width="1.1" stroke-linejoin="round"/><polygon points="781.6,698.8 728.4,682.5 781.6,663.1" fill="#b4b4b4" stroke="#b4b4b4" stroke-width="1.1" stroke-linejoin="round"/><polygon points="728.4,682.5 728.7,642.7 781.6,663.1" fill="#b6b6b6" stroke="#b6b6b6" stroke-width="1.1" stroke-linejoin="round"/><polygon points="728.4,682.5 671.8,661.2 728.7,642.7" fill="#bababa" stroke="#bababa" stroke-width="1.1" stroke-linejoin="round"/><polygon points="671.8,661.2 673.1,617.7 728.7,642.7" fill="#bcbcbc" stroke="#bcbcbc" stroke-width="1.1" stroke-linejoin="round"/><polygon points="671.8,661.2 615.5,635.2 673.1,617.7" fill="#bfbfbf" stroke="#bfbfbf" stroke-width="1.1" stroke-linejoin="round"/><polygon points="615.5,635.2 618.9,589.5 673.1,617.7" fill="#c1c1c1" stroke="#c1c1c1" stroke-width="1.1" stroke-linejoin="round"/><polygon points="615.5,635.2 563.9,606.2 618.9,589.5" fill="#c4c4c4" stroke="#c4c4c4" stroke-width="1.1" stroke-linejoin="round"/><polygon points="563.9,606.2 570.9,560.1 618.9,589.5" fill="#c5c5c5" stroke="#c5c5c5" stroke-width="1.1" stroke-linejoin="round"/><polygon points="563.9,606.2 521.4,576.4 570.9,560.1" fill="#c8c8c8" stroke="#c8c8c8" stroke-width="1.1" stroke-linejoin="round"/><polygon points="521.4,576.4 532.8,532.2 570.9,560.1" fill="#c9c9c9" stroke="#c9c9c9" stroke-width="1.1" stroke-linejoin="round"/><polygon points="521.4,576.4 490.2,548.1 532.8,532.2" fill="#cbcbcb" stroke="#cbcbcb" stroke-width="1.1" stroke-linejoin="round"/><polygon points="490.2,548.1 505.9,507.5 532.8,532.2" fill="#cccccc" stroke="#cccccc" stroke-width="1.1" stroke-linejoin="round"/><polygon points="490.2,548.1 470.1,522.8 505.9,507.5" fill="#cdcdcd" stroke="#cdcdcd" stroke-width="1.1" stroke-linejoin="round"/><polygon points="470.1,522.8 489.4,486.7 505.9,507.5" fill="#cdcdcd" stroke="#cdcdcd" stroke-width="1.1" stroke-linejoin="round"/><polygon points="470.1,522.8 459.6,501.1 489.4,486.7" fill="#cecece" stroke="#cecece" stroke-width="1.1" stroke-linejoin="round"/><polygon points="781.6,663.1 728.7,642.7 781.6,627.2" fill="#b7b7b7" stroke="#b7b7b7" stroke-width="1.1" stroke-linejoin="round"/><polygon points="728.7,642.7 729.4,603.0 781.6,627.2" fill="#b9b9b9" stroke="#b9b9b9" stroke-width="1.1" stroke-linejoin="round"/><polygon points="728.7,642.7 673.1,617.7 729.4,603.0" fill="#bcbcbc" stroke="#bcbcbc" stroke-width="1.1" stroke-linejoin="round"/><polygon points="673.1,617.7 675.3,575.4 729.4,603.0" fill="#bebebe" stroke="#bebebe" stroke-width="1.1" stroke-linejoin="round"/><polygon points="673.1,617.7 618.9,589.5 675.3,575.4" fill="#c1c1c1" stroke="#c1c1c1" stroke-width="1.1" stroke-linejoin="round"/><polygon points="618.9,589.5 624.0,546.4 675.3,575.4" fill="#c2c2c2" stroke="#c2c2c2" stroke-width="1.1" stroke-linejoin="round"/><polygon points="618.9,589.5 570.9,560.1 624.0,546.4" fill="#c5c5c5" stroke="#c5c5c5" stroke-width="1.1" stroke-linejoin="round"/><polygon points="570.9,560.1 580.1,518.6 624.0,546.4" fill="#c6c6c6" stroke="#c6c6c6" stroke-width="1.1" stroke-linejoin="round"/><polygon points="570.9,560.1 532.8,532.2 580.1,518.6" fill="#c8c8c8" stroke="#c8c8c8" stroke-width="1.1" stroke-linejoin="round"/><polygon points="532.8,532.2 546.3,494.0 580.1,518.6" fill="#c9c9c9" stroke="#c9c9c9" stroke-width="1.1" stroke-linejoin="round"/><polygon points="532.8,532.2 505.9,507.5 546.3,494.0" fill="#cbcbcb" stroke="#cbcbcb" stroke-width="1.1" stroke-linejoin="round"/><polygon points="505.9,507.5 523.1,473.7 546.3,494.0" fill="#cbcbcb" stroke="#cbcbcb" stroke-width="1.1" stroke-linejoin="round"/><polygon points="505.9,507.5 489.4,486.7 523.1,473.7" fill="#cccccc" stroke="#cccccc" stroke-width="1.1" stroke-linejoin="round"/><polygon points="781.6,627.2 729.4,603.0 781.6,591.5" fill="#b8b8b8" stroke="#b8b8b8" stroke-width="1.1" stroke-linejoin="round"/><polygon points="729.4,603.0 730.2,564.5 781.6,591.5" fill="#bababa" stroke="#bababa" stroke-width="1.1" stroke-linejoin="round"/><polygon points="729.4,603.0 675.3,575.4 730.2,564.5" fill="#bdbdbd" stroke="#bdbdbd" stroke-width="1.1" stroke-linejoin="round"/><polygon points="675.3,575.4 678.2,535.7 730.2,564.5" fill="#bfbfbf" stroke="#bfbfbf" stroke-width="1.1" stroke-linejoin="round"/><polygon points="675.3,575.4 624.0,546.4 678.2,535.7" fill="#c1c1c1" stroke="#c1c1c1" stroke-width="1.1" stroke-linejoin="round"/><polygon points="624.0,546.4 630.2,507.6 678.2,535.7" fill="#c2c2c2" stroke="#c2c2c2" stroke-width="1.1" stroke-linejoin="round"/><polygon points="624.0,546.4 580.1,518.6 630.2,507.6" fill="#c5c5c5" stroke="#c5c5c5" stroke-width="1.1" stroke-linejoin="round"/><polygon points="580.1,518.6 590.4,482.8 630.2,507.6" fill="#c6c6c6" stroke="#c6c6c6" stroke-width="1.1" stroke-linejoin="round"/><polygon points="580.1,518.6 546.3,494.0 590.4,482.8" fill="#c8c8c8" stroke="#c8c8c8" stroke-width="1.1" stroke-linejoin="round"/><polygon points="546.3,494.0 560.4,462.4 590.4,482.8" fill="#c8c8c8" stroke="#c8c8c8" stroke-width="1.1" stroke-linejoin="round"/><polygon points="546.3,494.0 523.1,473.7 560.4,462.4" fill="#cacaca" stroke="#cacaca" stroke-width="1.1" stroke-linejoin="round"/><polygon points="781.6,591.5 730.2,564.5 781.6,556.6" fill="#bababa" stroke="#bababa" stroke-width="1.1" stroke-linejoin="round"/><polygon points="730.2,564.5 731.2,528.0 781.6,556.6" fill="#bbbbbb" stroke="#bbbbbb" stroke-width="1.1" stroke-linejoin="round"/><polygon points="730.2,564.5 678.2,535.7 731.2,528.0" fill="#bebebe" stroke="#bebebe" stroke-width="1.1" stroke-linejoin="round"/><polygon points="678.2,535.7 681.5,499.5 731.2,528.0" fill="#bfbfbf" stroke="#bfbfbf" stroke-width="1.1" stroke-linejoin="round"/><polygon points="678.2,535.7 630.2,507.6 681.5,499.5" fill="#c2c2c2" stroke="#c2c2c2" stroke-width="1.1" stroke-linejoin="round"/><polygon points="630.2,507.6 637.0,473.9 681.5,499.5" fill="#c2c2c2" stroke="#c2c2c2" stroke-width="1.1" stroke-linejoin="round"/><polygon points="630.2,507.6 590.4,482.8 637.0,473.9" fill="#c5c5c5" stroke="#c5c5c5" stroke-width="1.1" stroke-linejoin="round"/><polygon points="590.4,482.8 600.8,452.8 637.0,473.9" fill="#c5c5c5" stroke="#c5c5c5" stroke-width="1.1" stroke-linejoin="round"/><polygon points="590.4,482.8 560.4,462.4 600.8,452.8" fill="#c7c7c7" stroke="#c7c7c7" stroke-width="1.1" stroke-linejoin="round"/><polygon points="781.6,556.6 731.2,528.0 781.6,523.1" fill="#bbbbbb" stroke="#bbbbbb" stroke-width="1.1" stroke-linejoin="round"/><polygon points="731.2,528.0 732.4,494.2 781.6,523.1" fill="#bcbcbc" stroke="#bcbcbc" stroke-width="1.1" stroke-linejoin="round"/><polygon points="731.2,528.0 681.5,499.5 732.4,494.2" fill="#bfbfbf" stroke="#bfbfbf" stroke-width="1.1" stroke-linejoin="round"/><polygon points="681.5,499.5 685.0,467.5 732.4,494.2" fill="#bfbfbf" stroke="#bfbfbf" stroke-width="1.1" stroke-linejoin="round"/><polygon points="681.5,499.5 637.0,473.9 685.0,467.5" fill="#c2c2c2" stroke="#c2c2c2" stroke-width="1.1" stroke-linejoin="round"/><polygon points="637.0,473.9 643.7,445.3 685.0,467.5" fill="#c2c2c2" stroke="#c2c2c2" stroke-width="1.1" stroke-linejoin="round"/><polygon points="637.0,473.9 600.8,452.8 643.7,445.3" fill="#c5c5c5" stroke="#c5c5c5" stroke-width="1.1" stroke-linejoin="round"/><polygon points="781.6,523.1 732.4,494.2 781.6,491.4" fill="#bbbbbb" stroke="#bbbbbb" stroke-width="1.1" stroke-linejoin="round"/><polygon points="732.4,494.2 733.6,463.6 781.6,491.4" fill="#bcbcbc" stroke="#bcbcbc" stroke-width="1.1" stroke-linejoin="round"/><polygon points="732.4,494.2 685.0,467.5 733.6,463.6" fill="#bfbfbf" stroke="#bfbfbf" stroke-width="1.1" stroke-linejoin="round"/><polygon points="685.0,467.5 688.6,439.8 733.6,463.6" fill="#bfbfbf" stroke="#bfbfbf" stroke-width="1.1" stroke-linejoin="round"/><polygon points="685.0,467.5 643.7,445.3 688.6,439.8" fill="#c2c2c2" stroke="#c2c2c2" stroke-width="1.1" stroke-linejoin="round"/><polygon points="781.6,491.4 733.6,463.6 781.6,462.1" fill="#bcbcbc" stroke="#bcbcbc" stroke-width="1.1" stroke-linejoin="round"/><polygon points="733.6,463.6 734.8,436.5 781.6,462.1" fill="#bcbcbc" stroke="#bcbcbc" stroke-width="1.1" stroke-linejoin="round"/><polygon points="733.6,463.6 688.6,439.8 734.8,436.5" fill="#bfbfbf" stroke="#bfbfbf" stroke-width="1.1" stroke-linejoin="round"/><polygon points="781.6,462.1 734.8,436.5 781.6,435.3" fill="#bcbcbc" stroke="#bcbcbc" stroke-width="1.1" stroke-linejoin="round"/><polygon points="1185.4,632.2 1182.9,659.3 1184.7,613.8" fill="#434343" stroke="#434343" stroke-width="1.1" stroke-linejoin="round"/><polygon points="1182.9,659.3 1181.8,641.6 1184.7,613.8" fill="#444444" stroke="#444444" stroke-width="1.1" stroke-linejoin="round"/><polygon points="1182.9,659.3 1175.1,686.3 1181.8,641.6" fill="#444444" stroke="#444444" stroke-width="1.1" stroke-linejoin="round"/><polygon points="1175.1,686.3 1172.8,669.9 1181.8,641.6" fill="#464646" stroke="#464646" stroke-width="1.1" stroke-linejoin="round"/><polygon points="1175.1,686.3 1161.8,713.0 1172.8,669.9" fill="#474747" stroke="#474747" stroke-width="1.1" stroke-linejoin="round"/><polygon points="1161.8,713.0 1157.4,698.4 1172.8,669.9" fill="#4a4a4a" stroke="#4a4a4a" stroke-width="1.1" stroke-linejoin="round"/><polygon points="1161.8,713.0 1143.2,738.9 1157.4,698.4" fill="#494949" stroke="#494949" stroke-width="1.1" stroke-linejoin="round"/><polygon points="1143.2,738.9 1135.2,726.2 1157.4,698.4" fill="#4e4e4e" stroke="#4e4e4e" stroke-width="1.1" stroke-linejoin="round"/><polygon points="1143.2,738.9 1119.2,763.6 1135.2,726.2" fill="#4d4d4d" stroke="#4d4d4d" stroke-width="1.1" stroke-linejoin="round"/><polygon points="1119.2,763.6 1106.2,752.7 1135.2,726.2" fill="#525252" stroke="#525252" stroke-width="1.1" stroke-linejoin="round"/><polygon points="1119.2,763.6 1090.1,786.6 1106.2,752.7" fill="#515151" stroke="#515151" stroke-width="1.1" stroke-linejoin="round"/><polygon points="1090.1,786.6 1071.0,777.1 1106.2,752.7" fill="#575757" stroke="#575757" stroke-width="1.1" stroke-linejoin="round"/><polygon points="1090.1,786.6 1056.1,807.7 1071.0,777.1" fill="#565656" stroke="#565656" stroke-width="1.1" stroke-linejoin="round"/><polygon points="1056.1,807.7 1030.2,798.7 1071.0,777.1" fill="#5d5d5d" stroke="#5d5d5d" stroke-width="1.1" stroke-linejoin="round"/><polygon points="1056.1,807.7 1017.8,826.2 1030.2,798.7" fill="#5b5b5b" stroke="#5b5b5b" stroke-width="1.1" stroke-linejoin="round"/><polygon points="1017.8,826.2 984.7,816.9 1030.2,798.7" fill="#636363" stroke="#636363" stroke-width="1.1" stroke-linejoin="round"/><polygon points="1017.8,826.2 975.5,842.0 984.7,816.9" fill="#616161" stroke="#616161" stroke-width="1.1" stroke-linejoin="round"/><polygon points="975.5,842.0 935.9,831.3 984.7,816.9" fill="#696969" stroke="#696969" stroke-width="1.1" stroke-linejoin="round"/><polygon points="975.5,842.0 930.0,854.6 935.9,831.3" fill="#686868" stroke="#686868" stroke-width="1.1" stroke-linejoin="round"/><polygon points="930.0,854.6 884.9,841.7 935.9,831.3" fill="#6f6f6f" stroke="#6f6f6f" stroke-width="1.1" stroke-linejoin="round"/><polygon points="930.0,854.6 882.0,863.8 884.9,841.7" fill="#6e6e6e" stroke="#6e6e6e" stroke-width="1.1" stroke-linejoin="round"/><polygon points="882.0,863.8 833.1,847.9 884.9,841.7" fill="#757575" stroke="#757575" stroke-width="1.1" stroke-linejoin="round"/><polygon points="882.0,863.8 832.3,869.4 833.1,847.9" fill="#757575" stroke="#757575" stroke-width="1.1" stroke-linejoin="round"/><polygon points="832.3,869.4 781.6,850.1 833.1,847.9" fill="#7c7c7c" stroke="#7c7c7c" stroke-width="1.1" stroke-linejoin="round"/><polygon points="832.3,869.4 781.6,871.3 781.6,850.1" fill="#7c7c7c" stroke="#7c7c7c" stroke-width="1.1" stroke-linejoin="round"/><polygon points="1182.2,587.1 1184.7,613.8 1176.4,568.8" fill="#535353" stroke="#535353" stroke-width="1.1" stroke-linejoin="round"/><polygon points="1184.7,613.8 1178.5,595.1 1176.4,568.8" fill="#545454" stroke="#545454" stroke-width="1.1" stroke-linejoin="round"/><polygon points="1184.7,613.8 1181.8,641.6 1178.5,595.1" fill="#545454" stroke="#545454" stroke-width="1.1" stroke-linejoin="round"/><polygon points="1181.8,641.6 1174.6,623.0 1178.5,595.1" fill="#565656" stroke="#565656" stroke-width="1.1" stroke-linejoin="round"/><polygon points="1181.8,641.6 1172.8,669.9 1174.6,623.0" fill="#565656" stroke="#565656" stroke-width="1.1" stroke-linejoin="round"/><polygon points="1172.8,669.9 1163.8,652.2 1174.6,623.0" fill="#595959" stroke="#595959" stroke-width="1.1" stroke-linejoin="round"/><polygon points="1172.8,669.9 1157.4,698.4 1163.8,652.2" fill="#595959" stroke="#595959" stroke-width="1.1" stroke-linejoin="round"/><polygon points="1157.4,698.4 1145.1,681.9 1163.8,652.2" fill="#5d5d5d" stroke="#5d5d5d" stroke-width="1.1" stroke-linejoin="round"/><polygon points="1157.4,698.4 1135.2,726.2 1145.1,681.9" fill="#5c5c5c" stroke="#5c5c5c" stroke-width="1.1" stroke-linejoin="round"/><polygon points="1135.2,726.2 1118.2,711.2 1145.1,681.9" fill="#626262" stroke="#626262" stroke-width="1.1" stroke-linejoin="round"/><polygon points="1135.2,726.2 1106.2,752.7 1118.2,711.2" fill="#606060" stroke="#606060" stroke-width="1.1" stroke-linejoin="round"/><polygon points="1106.2,752.7 1083.2,738.9 1118.2,711.2" fill="#676767" stroke="#676767" stroke-width="1.1" stroke-linejoin="round"/><polygon points="1106.2,752.7 1071.0,777.1 1083.2,738.9" fill="#656565" stroke="#656565" stroke-width="1.1" stroke-linejoin="round"/><polygon points="1071.0,777.1 1041.0,763.9 1083.2,738.9" fill="#6c6c6c" stroke="#6c6c6c" stroke-width="1.1" stroke-linejoin="round"/><polygon points="1071.0,777.1 1030.2,798.7 1041.0,763.9" fill="#6a6a6a" stroke="#6a6a6a" stroke-width="1.1" stroke-linejoin="round"/><polygon points="1030.2,798.7 993.0,785.2 1041.0,763.9" fill="#727272" stroke="#727272" stroke-width="1.1" stroke-linejoin="round"/><polygon points="1030.2,798.7 984.7,816.9 993.0,785.2" fill="#707070" stroke="#707070" stroke-width="1.1" stroke-linejoin="round"/><polygon points="984.7,816.9 941.2,802.1 993.0,785.2" fill="#787878" stroke="#787878" stroke-width="1.1" stroke-linejoin="round"/><polygon points="984.7,816.9 935.9,831.3 941.2,802.1" fill="#777777" stroke="#777777" stroke-width="1.1" stroke-linejoin="round"/><polygon points="935.9,831.3 887.6,814.3 941.2,802.1" fill="#7e7e7e" stroke="#7e7e7e" stroke-width="1.1" stroke-linejoin="round"/><polygon points="935.9,831.3 884.9,841.7 887.6,814.3" fill="#7d7d7d" stroke="#7d7d7d" stroke-width="1.1" stroke-linejoin="round"/><polygon points="884.9,841.7 833.9,822.0 887.6,814.3" fill="#848484" stroke="#848484" stroke-width="1.1" stroke-linejoin="round"/><polygon points="884.9,841.7 833.1,847.9 833.9,822.0" fill="#848484" stroke="#848484" stroke-width="1.1" stroke-linejoin="round"/><polygon points="833.1,847.9 781.6,825.3 833.9,822.0" fill="#8a8a8a" stroke="#8a8a8a" stroke-width="1.1" stroke-linejoin="round"/><polygon points="833.1,847.9 781.6,850.1 781.6,825.3" fill="#8a8a8a" stroke="#8a8a8a" stroke-width="1.1" stroke-linejoin="round"/><polygon points="1176.4,568.8 1178.5,595.1 1165.6,550.9" fill="#646464" stroke="#646464" stroke-width="1.1" stroke-linejoin="round"/><polygon points="1178.5,595.1 1166.3,576.2 1165.6,550.9" fill="#666666" stroke="#666666" stroke-width="1.1" stroke-linejoin="round"/><polygon points="1178.5,595.1 1174.6,623.0 1166.3,576.2" fill="#666666" stroke="#666666" stroke-width="1.1" stroke-linejoin="round"/><polygon points="1174.6,623.0 1160.5,603.9 1166.3,576.2" fill="#696969" stroke="#696969" stroke-width="1.1" stroke-linejoin="round"/><polygon points="1174.6,623.0 1163.8,652.2 1160.5,603.9" fill="#696969" stroke="#696969" stroke-width="1.1" stroke-linejoin="round"/><polygon points="1163.8,652.2 1146.6,633.4 1160.5,603.9" fill="#6c6c6c" stroke="#6c6c6c" stroke-width="1.1" stroke-linejoin="round"/><polygon points="1163.8,652.2 1145.1,681.9 1146.6,633.4" fill="#6c6c6c" stroke="#6c6c6c" stroke-width="1.1" stroke-linejoin="round"/><polygon points="1145.1,681.9 1123.4,663.8 1146.6,633.4" fill="#717171" stroke="#717171" stroke-width="1.1" stroke-linejoin="round"/><polygon points="1145.1,681.9 1118.2,711.2 1123.4,663.8" fill="#707070" stroke="#707070" stroke-width="1.1" stroke-linejoin="round"/><polygon points="1118.2,711.2 1090.6,693.8 1123.4,663.8" fill="#767676" stroke="#767676" stroke-width="1.1" stroke-linejoin="round"/><polygon points="1118.2,711.2 1083.2,738.9 1090.6,693.8" fill="#747474" stroke="#747474" stroke-width="1.1" stroke-linejoin="round"/><polygon points="1083.2,738.9 1048.7,721.9 1090.6,693.8" fill="#7b7b7b" stroke="#7b7b7b" stroke-width="1.1" stroke-linejoin="round"/><polygon points="1083.2,738.9 1041.0,763.9 1048.7,721.9" fill="#797979" stroke="#797979" stroke-width="1.1" stroke-linejoin="round"/><polygon points="1041.0,763.9 999.5,746.6 1048.7,721.9" fill="#818181" stroke="#818181" stroke-width="1.1" stroke-linejoin="round"/><polygon points="1041.0,763.9 993.0,785.2 999.5,746.6" fill="#7f7f7f" stroke="#7f7f7f" stroke-width="1.1" stroke-linejoin="round"/><polygon points="993.0,785.2 945.6,766.8 999.5,746.6" fill="#878787" stroke="#878787" stroke-width="1.1" stroke-linejoin="round"/><polygon points="993.0,785.2 941.2,802.1 945.6,766.8" fill="#858585" stroke="#858585" stroke-width="1.1" stroke-linejoin="round"/><polygon points="941.2,802.1 889.7,781.9 945.6,766.8" fill="#8c8c8c" stroke="#8c8c8c" stroke-width="1.1" stroke-linejoin="round"/><polygon points="941.2,802.1 887.6,814.3 889.7,781.9" fill="#8b8b8b" stroke="#8b8b8b" stroke-width="1.1" stroke-linejoin="round"/><polygon points="887.6,814.3 834.5,791.9 889.7,781.9" fill="#929292" stroke="#929292" stroke-width="1.1" stroke-linejoin="round"/><polygon points="887.6,814.3 833.9,822.0 834.5,791.9" fill="#919191" stroke="#919191" stroke-width="1.1" stroke-linejoin="round"/><polygon points="833.9,822.0 781.6,797.2 834.5,791.9" fill="#979797" stroke="#979797" stroke-width="1.1" stroke-linejoin="round"/><polygon points="833.9,822.0 781.6,825.3 781.6,797.2" fill="#969696" stroke="#969696" stroke-width="1.1" stroke-linejoin="round"/><polygon points="1165.6,550.9 1166.3,576.2 1149.7,533.4" fill="#737373" stroke="#737373" stroke-width="1.1" stroke-linejoin="round"/><polygon points="1166.3,576.2 1148.0,557.6 1149.7,533.4" fill="#767676" stroke="#767676" stroke-width="1.1" stroke-linejoin="round"/><polygon points="1166.3,576.2 1160.5,603.9 1148.0,557.6" fill="#767676" stroke="#767676" stroke-width="1.1" stroke-linejoin="round"/><polygon points="1160.5,603.9 1138.8,584.6 1148.0,557.6" fill="#797979" stroke="#797979" stroke-width="1.1" stroke-linejoin="round"/><polygon points="1160.5,603.9 1146.6,633.4 1138.8,584.6" fill="#797979" stroke="#797979" stroke-width="1.1" stroke-linejoin="round"/><polygon points="1146.6,633.4 1120.4,613.9 1138.8,584.6" fill="#7e7e7e" stroke="#7e7e7e" stroke-width="1.1" stroke-linejoin="round"/><polygon points="1146.6,633.4 1123.4,663.8 1120.4,613.9" fill="#7d7d7d" stroke="#7d7d7d" stroke-width="1.1" stroke-linejoin="round"/><polygon points="1123.4,663.8 1091.4,644.5 1120.4,613.9" fill="#828282" stroke="#828282" stroke-width="1.1" stroke-linejoin="round"/><polygon points="1123.4,663.8 1090.6,693.8 1091.4,644.5" fill="#818181" stroke="#818181" stroke-width="1.1" stroke-linejoin="round"/><polygon points="1090.6,693.8 1051.8,674.6 1091.4,644.5" fill="#888888" stroke="#888888" stroke-width="1.1" stroke-linejoin="round"/><polygon points="1090.6,693.8 1048.7,721.9 1051.8,674.6" fill="#868686" stroke="#868686" stroke-width="1.1" stroke-linejoin="round"/><polygon points="1048.7,721.9 1003.1,702.4 1051.8,674.6" fill="#8d8d8d" stroke="#8d8d8d" stroke-width="1.1" stroke-linejoin="round"/><polygon points="1048.7,721.9 999.5,746.6 1003.1,702.4" fill="#8b8b8b" stroke="#8b8b8b" stroke-width="1.1" stroke-linejoin="round"/><polygon points="999.5,746.6 948.4,726.1 1003.1,702.4" fill="#929292" stroke="#929292" stroke-width="1.1" stroke-linejoin="round"/><polygon points="999.5,746.6 945.6,766.8 948.4,726.1" fill="#919191" stroke="#919191" stroke-width="1.1" stroke-linejoin="round"/><polygon points="945.6,766.8 891.2,744.8 948.4,726.1" fill="#979797" stroke="#979797" stroke-width="1.1" stroke-linejoin="round"/><polygon points="945.6,766.8 889.7,781.9 891.2,744.8" fill="#969696" stroke="#969696" stroke-width="1.1" stroke-linejoin="round"/><polygon points="889.7,781.9 834.9,758.1 891.2,744.8" fill="#9c9c9c" stroke="#9c9c9c" stroke-width="1.1" stroke-linejoin="round"/><polygon points="889.7,781.9 834.5,791.9 834.9,758.1" fill="#9b9b9b" stroke="#9b9b9b" stroke-width="1.1" stroke-linejoin="round"/><polygon points="834.5,791.9 781.6,766.4 834.9,758.1" fill="#a1a1a1" stroke="#a1a1a1" stroke-width="1.1" stroke-linejoin="round"/><polygon points="834.5,791.9 781.6,797.2 781.6,766.4" fill="#a0a0a0" stroke="#a0a0a0" stroke-width="1.1" stroke-linejoin="round"/><polygon points="1149.7,533.4 1148.0,557.6 1129.0,516.7" fill="#808080" stroke="#808080" stroke-width="1.1" stroke-linejoin="round"/><polygon points="1148.0,557.6 1123.5,539.7 1129.0,516.7" fill="#848484" stroke="#848484" stroke-width="1.1" stroke-linejoin="round"/><polygon points="1148.0,557.6 1138.8,584.6 1123.5,539.7" fill="#848484" stroke="#848484" stroke-width="1.1" stroke-linejoin="round"/><polygon points="1138.8,584.6 1109.6,565.8 1123.5,539.7" fill="#888888" stroke="#888888" stroke-width="1.1" stroke-linejoin="round"/><polygon points="1138.8,584.6 1120.4,613.9 1109.6,565.8" fill="#878787" stroke="#878787" stroke-width="1.1" stroke-linejoin="round"/><polygon points="1120.4,613.9 1085.2,594.6 1109.6,565.8" fill="#8c8c8c" stroke="#8c8c8c" stroke-width="1.1" stroke-linejoin="round"/><polygon points="1120.4,613.9 1091.4,644.5 1085.2,594.6" fill="#8c8c8c" stroke="#8c8c8c" stroke-width="1.1" stroke-linejoin="round"/><polygon points="1091.4,644.5 1049.4,624.9 1085.2,594.6" fill="#919191" stroke="#919191" stroke-width="1.1" stroke-linejoin="round"/><polygon points="1091.4,644.5 1051.8,674.6 1049.4,624.9" fill="#909090" stroke="#909090" stroke-width="1.1" stroke-linejoin="round"/><polygon points="1051.8,674.6 1003.1,654.6 1049.4,624.9" fill="#969696" stroke="#969696" stroke-width="1.1" stroke-linejoin="round"/><polygon points="1051.8,674.6 1003.1,702.4 1003.1,654.6" fill="#959595" stroke="#959595" stroke-width="1.1" stroke-linejoin="round"/><polygon points="1003.1,702.4 949.2,681.6 1003.1,654.6" fill="#9b9b9b" stroke="#9b9b9b" stroke-width="1.1" stroke-linejoin="round"/><polygon points="1003.1,702.4 948.4,726.1 949.2,681.6" fill="#9a9a9a" stroke="#9a9a9a" stroke-width="1.1" stroke-linejoin="round"/><polygon points="948.4,726.1 891.8,704.1 949.2,681.6" fill="#a0a0a0" stroke="#a0a0a0" stroke-width="1.1" stroke-linejoin="round"/><polygon points="948.4,726.1 891.2,744.8 891.8,704.1" fill="#9f9f9f" stroke="#9f9f9f" stroke-width="1.1" stroke-linejoin="round"/><polygon points="891.2,744.8 835.0,721.3 891.8,704.1" fill="#a4a4a4" stroke="#a4a4a4" stroke-width="1.1" stroke-linejoin="round"/><polygon points="891.2,744.8 834.9,758.1 835.0,721.3" fill="#a3a3a3" stroke="#a3a3a3" stroke-width="1.1" stroke-linejoin="round"/><polygon points="834.9,758.1 781.6,733.4 835.0,721.3" fill="#a8a8a8" stroke="#a8a8a8" stroke-width="1.1" stroke-linejoin="round"/><polygon points="834.9,758.1 781.6,766.4 781.6,733.4" fill="#a7a7a7" stroke="#a7a7a7" stroke-width="1.1" stroke-linejoin="round"/><polygon points="1129.0,516.7 1123.5,539.7 1103.7,501.1" fill="#8b8b8b" stroke="#8b8b8b" stroke-width="1.1" stroke-linejoin="round"/><polygon points="1123.5,539.7 1093.1,522.8 1103.7,501.1" fill="#8f8f8f" stroke="#8f8f8f" stroke-width="1.1" stroke-linejoin="round"/><polygon points="1123.5,539.7 1109.6,565.8 1093.1,522.8" fill="#8f8f8f" stroke="#8f8f8f" stroke-width="1.1" stroke-linejoin="round"/><polygon points="1109.6,565.8 1073.1,548.1 1093.1,522.8" fill="#939393" stroke="#939393" stroke-width="1.1" stroke-linejoin="round"/><polygon points="1109.6,565.8 1085.2,594.6 1073.1,548.1" fill="#939393" stroke="#939393" stroke-width="1.1" stroke-linejoin="round"/><polygon points="1085.2,594.6 1041.9,576.4 1073.1,548.1" fill="#989898" stroke="#989898" stroke-width="1.1" stroke-linejoin="round"/><polygon points="1085.2,594.6 1049.4,624.9 1041.9,576.4" fill="#979797" stroke="#979797" stroke-width="1.1" stroke-linejoin="round"/><polygon points="1049.4,624.9 999.3,606.2 1041.9,576.4" fill="#9c9c9c" stroke="#9c9c9c" stroke-width="1.1" stroke-linejoin="round"/><polygon points="1049.4,624.9 1003.1,654.6 999.3,606.2" fill="#9c9c9c" stroke="#9c9c9c" stroke-width="1.1" stroke-linejoin="round"/><polygon points="1003.1,654.6 947.8,635.2 999.3,606.2" fill="#a1a1a1" stroke="#a1a1a1" stroke-width="1.1" stroke-linejoin="round"/><polygon points="1003.1,654.6 949.2,681.6 947.8,635.2" fill="#a0a0a0" stroke="#a0a0a0" stroke-width="1.1" stroke-linejoin="round"/><polygon points="949.2,681.6 891.5,661.2 947.8,635.2" fill="#a5a5a5" stroke="#a5a5a5" stroke-width="1.1" stroke-linejoin="round"/><polygon points="949.2,681.6 891.8,704.1 891.5,661.2" fill="#a5a5a5" stroke="#a5a5a5" stroke-width="1.1" stroke-linejoin="round"/><polygon points="891.8,704.1 834.9,682.5 891.5,661.2" fill="#a9a9a9" stroke="#a9a9a9" stroke-width="1.1" stroke-linejoin="round"/><polygon points="891.8,704.1 835.0,721.3 834.9,682.5" fill="#a9a9a9" stroke="#a9a9a9" stroke-width="1.1" stroke-linejoin="round"/><polygon points="835.0,721.3 781.6,698.8 834.9,682.5" fill="#adadad" stroke="#adadad" stroke-width="1.1" stroke-linejoin="round"/><polygon points="835.0,721.3 781.6,733.4 781.6,698.8" fill="#adadad" stroke="#adadad" stroke-width="1.1" stroke-linejoin="round"/><polygon points="1103.7,501.1 1093.1,522.8 1073.9,486.7" fill="#949494" stroke="#949494" stroke-width="1.1" stroke-linejoin="round"/><polygon points="1093.1,522.8 1057.4,507.5 1073.9,486.7" fill="#989898" stroke="#989898" stroke-width="1.1" stroke-linejoin="round"/><polygon points="1093.1,522.8 1073.1,548.1 1057.4,507.5" fill="#989898" stroke="#989898" stroke-width="1.1" stroke-linejoin="round"/><polygon points="1073.1,548.1 1030.5,532.2 1057.4,507.5" fill="#9d9d9d" stroke="#9d9d9d" stroke-width="1.1" stroke-linejoin="round"/><polygon points="1073.1,548.1 1041.9,576.4 1030.5,532.2" fill="#9c9c9c" stroke="#9c9c9c" stroke-width="1.1" stroke-linejoin="round"/><polygon points="1041.9,576.4 992.4,560.1 1030.5,532.2" fill="#a1a1a1" stroke="#a1a1a1" stroke-width="1.1" stroke-linejoin="round"/><polygon points="1041.9,576.4 999.3,606.2 992.4,560.1" fill="#a1a1a1" stroke="#a1a1a1" stroke-width="1.1" stroke-linejoin="round"/><polygon points="999.3,606.2 944.4,589.5 992.4,560.1" fill="#a5a5a5" stroke="#a5a5a5" stroke-width="1.1" stroke-linejoin="round"/><polygon points="999.3,606.2 947.8,635.2 944.4,589.5" fill="#a5a5a5" stroke="#a5a5a5" stroke-width="1.1" stroke-linejoin="round"/><polygon points="947.8,635.2 890.2,617.7 944.4,589.5" fill="#aaaaaa" stroke="#aaaaaa" stroke-width="1.1" stroke-linejoin="round"/><polygon points="947.8,635.2 891.5,661.2 890.2,617.7" fill="#a9a9a9" stroke="#a9a9a9" stroke-width="1.1" stroke-linejoin="round"/><polygon points="891.5,661.2 834.5,642.7 890.2,617.7" fill="#adadad" stroke="#adadad" stroke-width="1.1" stroke-linejoin="round"/><polygon points="891.5,661.2 834.9,682.5 834.5,642.7" fill="#adadad" stroke="#adadad" stroke-width="1.1" stroke-linejoin="round"/><polygon points="834.9,682.5 781.6,663.1 834.5,642.7" fill="#b1b1b1" stroke="#b1b1b1" stroke-width="1.1" stroke-linejoin="round"/><polygon points="834.9,682.5 781.6,698.8 781.6,663.1" fill="#b0b0b0" stroke="#b0b0b0" stroke-width="1.1" stroke-linejoin="round"/><polygon points="1073.9,486.7 1057.4,507.5 1040.2,473.7" fill="#9c9c9c" stroke="#9c9c9c" stroke-width="1.1" stroke-linejoin="round"/><polygon points="1057.4,507.5 1017.0,494.0 1040.2,473.7" fill="#a0a0a0" stroke="#a0a0a0" stroke-width="1.1" stroke-linejoin="round"/><polygon points="1057.4,507.5 1030.5,532.2 1017.0,494.0" fill="#a0a0a0" stroke="#a0a0a0" stroke-width="1.1" stroke-linejoin="round"/><polygon points="1030.5,532.2 983.2,518.6 1017.0,494.0" fill="#a4a4a4" stroke="#a4a4a4" stroke-width="1.1" stroke-linejoin="round"/><polygon points="1030.5,532.2 992.4,560.1 983.2,518.6" fill="#a4a4a4" stroke="#a4a4a4" stroke-width="1.1" stroke-linejoin="round"/><polygon points="992.4,560.1 939.3,546.4 983.2,518.6" fill="#a8a8a8" stroke="#a8a8a8" stroke-width="1.1" stroke-linejoin="round"/><polygon points="992.4,560.1 944.4,589.5 939.3,546.4" fill="#a8a8a8" stroke="#a8a8a8" stroke-width="1.1" stroke-linejoin="round"/><polygon points="944.4,589.5 888.0,575.4 939.3,546.4" fill="#adadad" stroke="#adadad" stroke-width="1.1" stroke-linejoin="round"/><polygon points="944.4,589.5 890.2,617.7 888.0,575.4" fill="#acacac" stroke="#acacac" stroke-width="1.1" stroke-linejoin="round"/><polygon points="890.2,617.7 833.9,603.0 888.0,575.4" fill="#b0b0b0" stroke="#b0b0b0" stroke-width="1.1" stroke-linejoin="round"/><polygon points="890.2,617.7 834.5,642.7 833.9,603.0" fill="#b0b0b0" stroke="#b0b0b0" stroke-width="1.1" stroke-linejoin="round"/><polygon points="834.5,642.7 781.6,627.2 833.9,603.0" fill="#b3b3b3" stroke="#b3b3b3" stroke-width="1.1" stroke-linejoin="round"/><polygon points="834.5,642.7 781.6,663.1 781.6,627.2" fill="#b3b3b3" stroke="#b3b3b3" stroke-width="1.1" stroke-linejoin="round"/><polygon points="1040.2,473.7 1017.0,494.0 1002.9,462.4" fill="#a2a2a2" stroke="#a2a2a2" stroke-width="1.1" stroke-linejoin="round"/><polygon points="1017.0,494.0 972.9,482.8 1002.9,462.4" fill="#a6a6a6" stroke="#a6a6a6" stroke-width="1.1" stroke-linejoin="round"/><polygon points="1017.0,494.0 983.2,518.6 972.9,482.8" fill="#a6a6a6" stroke="#a6a6a6" stroke-width="1.1" stroke-linejoin="round"/><polygon points="983.2,518.6 933.0,507.6 972.9,482.8" fill="#ababab" stroke="#ababab" stroke-width="1.1" stroke-linejoin="round"/><polygon points="983.2,518.6 939.3,546.4 933.0,507.6" fill="#aaaaaa" stroke="#aaaaaa" stroke-width="1.1" stroke-linejoin="round"/><polygon points="939.3,546.4 885.1,535.7 933.0,507.6" fill="#aeaeae" stroke="#aeaeae" stroke-width="1.1" stroke-linejoin="round"/><polygon points="939.3,546.4 888.0,575.4 885.1,535.7" fill="#aeaeae" stroke="#aeaeae" stroke-width="1.1" stroke-linejoin="round"/><polygon points="888.0,575.4 833.1,564.5 885.1,535.7" fill="#b2b2b2" stroke="#b2b2b2" stroke-width="1.1" stroke-linejoin="round"/><polygon points="888.0,575.4 833.9,603.0 833.1,564.5" fill="#b2b2b2" stroke="#b2b2b2" stroke-width="1.1" stroke-linejoin="round"/><polygon points="833.9,603.0 781.6,591.5 833.1,564.5" fill="#b5b5b5" stroke="#b5b5b5" stroke-width="1.1" stroke-linejoin="round"/><polygon points="833.9,603.0 781.6,627.2 781.6,591.5" fill="#b5b5b5" stroke="#b5b5b5" stroke-width="1.1" stroke-linejoin="round"/><polygon points="1002.9,462.4 972.9,482.8 962.5,452.8" fill="#a8a8a8" stroke="#a8a8a8" stroke-width="1.1" stroke-linejoin="round"/><polygon points="972.9,482.8 926.3,473.9 962.5,452.8" fill="#acacac" stroke="#acacac" stroke-width="1.1" stroke-linejoin="round"/><polygon points="972.9,482.8 933.0,507.6 926.3,473.9" fill="#acacac" stroke="#acacac" stroke-width="1.1" stroke-linejoin="round"/><polygon points="933.0,507.6 881.8,499.5 926.3,473.9" fill="#b0b0b0" stroke="#b0b0b0" stroke-width="1.1" stroke-linejoin="round"/><polygon points="933.0,507.6 885.1,535.7 881.8,499.5" fill="#b0b0b0" stroke="#b0b0b0" stroke-width="1.1" stroke-linejoin="round"/><polygon points="885.1,535.7 832.0,528.0 881.8,499.5" fill="#b3b3b3" stroke="#b3b3b3" stroke-width="1.1" stroke-linejoin="round"/><polygon points="885.1,535.7 833.1,564.5 832.0,528.0" fill="#b3b3b3" stroke="#b3b3b3" stroke-width="1.1" stroke-linejoin="round"/><polygon points="833.1,564.5 781.6,556.6 832.0,528.0" fill="#b7b7b7" stroke="#b7b7b7" stroke-width="1.1" stroke-linejoin="round"/><polygon points="833.1,564.5 781.6,591.5 781.6,556.6" fill="#b7b7b7" stroke="#b7b7b7" stroke-width="1.1" stroke-linejoin="round"/><polygon points="962.5,452.8 926.3,473.9 919.6,445.3" fill="#adadad" stroke="#adadad" stroke-width="1.1" stroke-linejoin="round"/><polygon points="926.3,473.9 878.2,467.5 919.6,445.3" fill="#b1b1b1" stroke="#b1b1b1" stroke-width="1.1" stroke-linejoin="round"/><polygon points="926.3,473.9 881.8,499.5 878.2,467.5" fill="#b0b0b0" stroke="#b0b0b0" stroke-width="1.1" stroke-linejoin="round"/><polygon points="881.8,499.5 830.9,494.2 878.2,467.5" fill="#b4b4b4" stroke="#b4b4b4" stroke-width="1.1" stroke-linejoin="round"/><polygon points="881.8,499.5 832.0,528.0 830.9,494.2" fill="#b4b4b4" stroke="#b4b4b4" stroke-width="1.1" stroke-linejoin="round"/><polygon points="832.0,528.0 781.6,523.1 830.9,494.2" fill="#b8b8b8" stroke="#b8b8b8" stroke-width="1.1" stroke-linejoin="round"/><polygon points="832.0,528.0 781.6,556.6 781.6,523.1" fill="#b7b7b7" stroke="#b7b7b7" stroke-width="1.1" stroke-linejoin="round"/><polygon points="919.6,445.3 878.2,467.5 874.7,439.8" fill="#b1b1b1" stroke="#b1b1b1" stroke-width="1.1" stroke-linejoin="round"/><polygon points="878.2,467.5 829.7,463.6 874.7,439.8" fill="#b5b5b5" stroke="#b5b5b5" stroke-width="1.1" stroke-linejoin="round"/><polygon points="878.2,467.5 830.9,494.2 829.7,463.6" fill="#b5b5b5" stroke="#b5b5b5" stroke-width="1.1" stroke-linejoin="round"/><polygon points="830.9,494.2 781.6,491.4 829.7,463.6" fill="#b8b8b8" stroke="#b8b8b8" stroke-width="1.1" stroke-linejoin="round"/><polygon points="830.9,494.2 781.6,523.1 781.6,491.4" fill="#b8b8b8" stroke="#b8b8b8" stroke-width="1.1" stroke-linejoin="round"/><polygon points="874.7,439.8 829.7,463.6 828.5,436.5" fill="#b5b5b5" stroke="#b5b5b5" stroke-width="1.1" stroke-linejoin="round"/><polygon points="829.7,463.6 781.6,462.1 828.5,436.5" fill="#b8b8b8" stroke="#b8b8b8" stroke-width="1.1" stroke-linejoin="round"/><polygon points="829.7,463.6 781.6,491.4 781.6,462.1" fill="#b8b8b8" stroke="#b8b8b8" stroke-width="1.1" stroke-linejoin="round"/><polygon points="828.5,436.5 781.6,462.1 781.6,435.3" fill="#b8b8b8" stroke="#b8b8b8" stroke-width="1.1" stroke-linejoin="round"/><polygon points="781.6,437.2 781.6,-2565.5 777.3,-2565.5 777.3,437.2" fill="#a8626c"/><polygon points="781.6,437.2 781.6,-2565.5 786.1,-2565.5 786.1,437.2" fill="#2f5c3c"/><line x1="781.6" y1="437.2" x2="781.6" y2="-2565.5" stroke="#e8e0e8" stroke-opacity="0.4" stroke-width="0.9"/></svg>
<div class="lb" style="transform:matrix3d(-0.184073,-1.06484,0,-0.000235495,1.35803,-0.462719,0,0.000314703,0,0,1,0,742.909,466.772,0,1);clip-path:inset(0 0 0 9.5px)">50</div>
<div class="lb" style="transform:matrix3d(-0.192501,-1.1133,0,-0.000246404,1.4208,-0.485306,0,0.000329282,0,0,1,0,740.715,275.432,0,1)">100</div>
<svg class="sv" width="1560" height="1143"><line x1="155.5" y1="1028.8" x2="311.7" y2="1118.6" stroke="#ff0000" stroke-width="1.3"/><line x1="155.5" y1="1028.8" x2="311.7" y2="939.5" stroke="#00ff00" stroke-width="1.3"/><line x1="155.5" y1="1028.8" x2="155.5" y2="914.7" stroke="#0000ff" stroke-width="1.3"/></svg>
  </div>
  <div id="panel">
    <div class="prog"></div>
    <div class="btn" style="top:59px">Load .py...</div>
    <div class="btn" style="top:123px">Reload</div>
    <div class="btn" style="top:187px">Export...</div>
    <div class="btn" style="top:251px">Frame</div>
    <div class="btn" style="top:315px">XYZ</div>
    <div class="btn" style="top:379px">X</div>
    <div class="btn" style="top:443px">Y</div>
    <div class="btn" style="top:507px">Z</div>
    <div class="cb" style="top:573px"></div><div class="lbl" style="top:574px">Grid</div>
    <div class="rd on" style="top:629px"></div><div class="lbl" style="top:630px">Perspective</div>
    <div class="rd" style="top:685px"></div><div class="lbl" style="top:686px">Orthogonal</div>
    <div class="cb on" style="top:741px"><svg width="28" height="28" style="position:absolute;left:0;top:0"><path d="M5.8 14.3 L12 21 L21.5 6.6" fill="none" stroke="#e4ecf8" stroke-width="3.6" stroke-linecap="round" stroke-linejoin="round"/></svg></div><div class="lbl" style="top:742px">Axes</div>
    <div class="cb" style="top:797px"></div><div class="lbl" style="top:798px">Edges</div>
    <div class="cb on" style="top:853px"><svg width="28" height="28" style="position:absolute;left:0;top:0"><path d="M5.8 14.3 L12 21 L21.5 6.6" fill="none" stroke="#e4ecf8" stroke-width="3.6" stroke-linecap="round" stroke-linejoin="round"/></svg></div><div class="lbl" style="top:854px">Gnomon</div>
  </div>
</div>
<div id="frame"></div>
</body></html>
